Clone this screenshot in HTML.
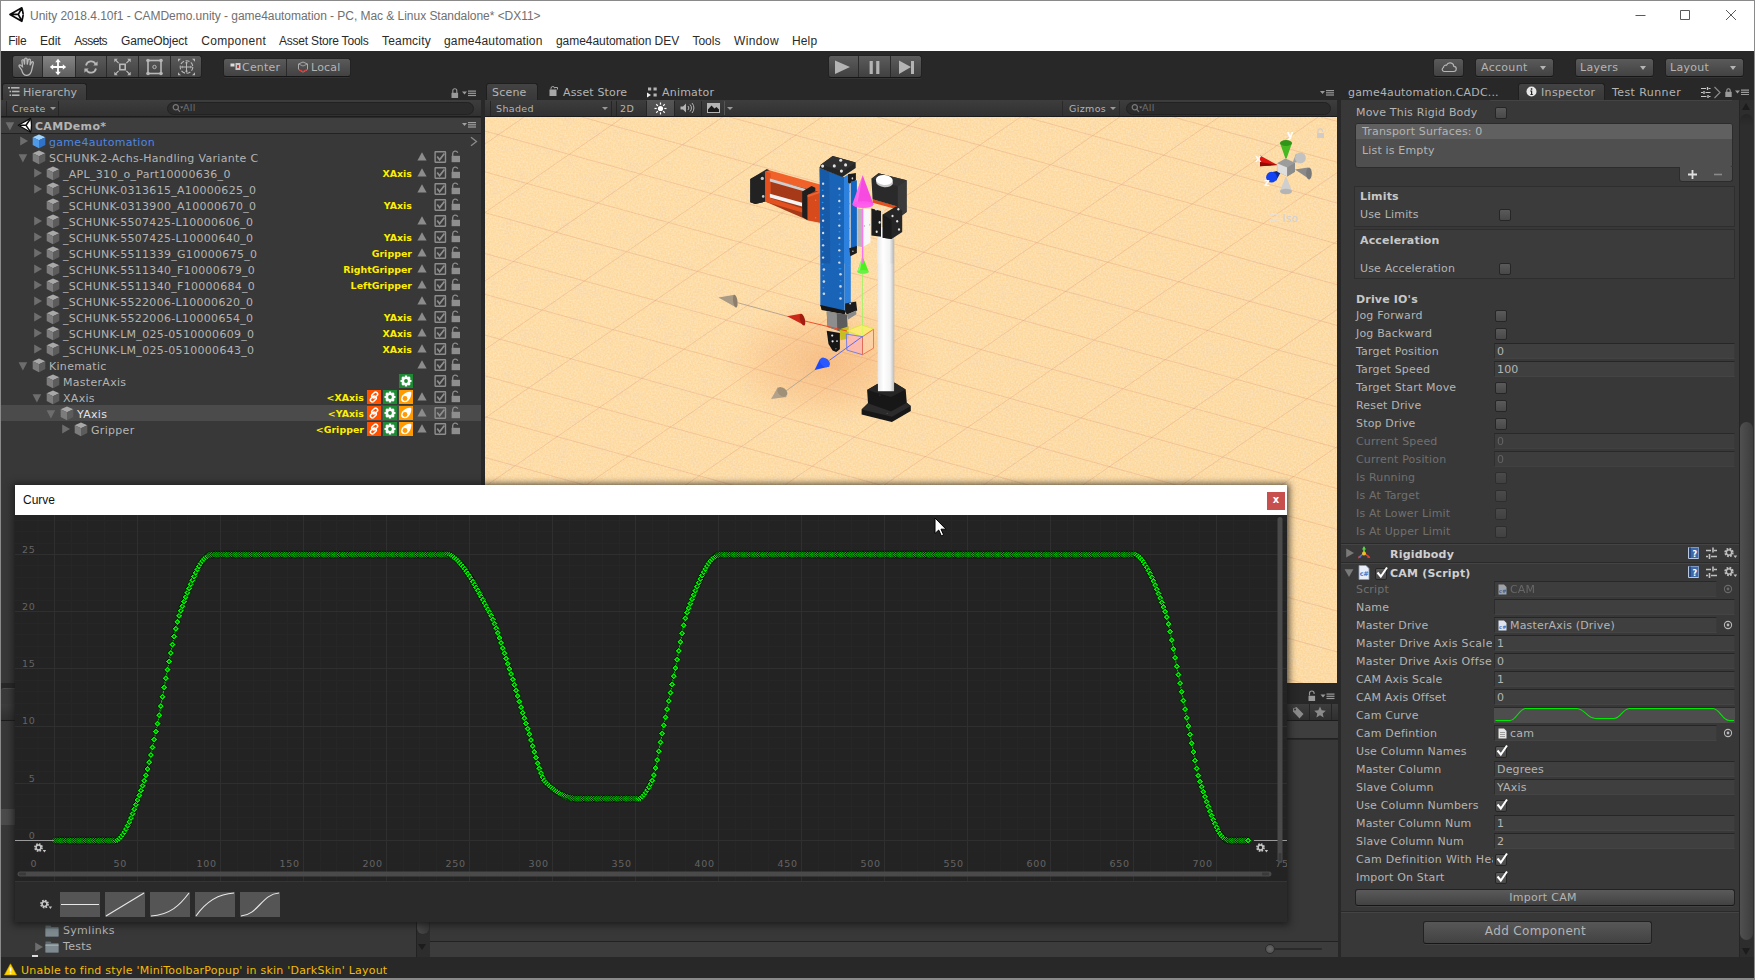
<!DOCTYPE html>
<html lang="en">
<head>
<meta charset="utf-8">
<title>Unity 2018.4.10f1 - CAMDemo.unity</title>
<style>
*{box-sizing:border-box;margin:0;padding:0}
html,body{width:1755px;height:980px;overflow:hidden;background:#282828}
body{position:relative;font:11px "DejaVu Sans","Liberation Sans",sans-serif;letter-spacing:.3px;color:#b4b4b4}
.a{position:absolute}
.t{position:absolute;white-space:pre;line-height:16px;height:16px}
.w{font:12px "Liberation Sans",sans-serif;letter-spacing:0}
.b{font-weight:bold}
.s9{font-size:9.500px;letter-spacing:.35px}
.tab{position:absolute;top:83px;height:17px;background:linear-gradient(#434343,#383838);border:1px solid #1f1f1f;border-bottom:none;border-radius:3px 3px 0 0}
.tb{position:absolute;height:16px;background:linear-gradient(#3d3d3d,#313131);border-bottom:1px solid #1c1c1c}
.btn{position:absolute;background:linear-gradient(#5a5a5a,#424242);border:1px solid #222;border-bottom-color:#161616;border-radius:3px;box-shadow:0 1px 0 rgba(255,255,255,.06)}
.fld{position:absolute;height:16px;background:#3f3f3f;border-top:1px solid #262626;border-left:1px solid #2d2d2d;border-bottom:1px solid #444;border-right:1px solid #3a3a3a;left:1494px;width:241px}
.fld span{position:absolute;left:2px;top:0px;letter-spacing:.17px;line-height:16px;white-space:pre}
.cb{position:absolute;width:12px;height:12px;left:1495px;background:linear-gradient(#5a5a5a,#484848);border:1px solid #262626;border-radius:2px}
.dis{color:#6f6f6f}
.sr{position:absolute;background:#2b2b2b;border-radius:8px;border:1px solid #222}
</style>
</head>
<body>
<!-- window title + menu -->
<div class="a" style="left:0;top:0;width:1755px;height:51px;background:#fff"></div>
<div class="a" style="left:0;top:0;width:1755px;height:1px;background:#8a8a8a"></div>
<div class="a" style="left:0;top:0;width:1px;height:980px;background:#8a8a8a;z-index:50"></div>
<div class="a" style="left:1754px;top:0;width:1px;height:980px;background:#8a8a8a;z-index:50"></div>
<svg class="a" style="left:7px;top:5px" width="20" height="20" viewBox="7 5 20 20" fill="none" stroke="#0a0a0a" stroke-width="1.7" stroke-linejoin="round" stroke-linecap="round"><path d="M10 14.400L21.800 7.800Q22.600 10.500 23.100 13.600M23.100 15.400Q22.600 18.500 21.800 21.300L10 14.400M10.500 14.400H18.300M18.300 14.400L21.600 8.300M18.300 14.400L21.600 20.600"/></svg>
<div class="t w" style="left:30px;top:9px;color:#707070;letter-spacing:-.04px">Unity 2018.4.10f1 - CAMDemo.unity - game4automation - PC, Mac &amp; Linux Standalone* &lt;DX11&gt;</div>
<svg class="a" style="left:1620px;top:0" width="135" height="30" viewBox="0 0 135 30"><path d="M15.5 15.5h10M60.5 10.5h9v9h-9zM106 10l10 10M116 10l-10 10" stroke="#5a5a5a" stroke-width="1" fill="none"/></svg>
<div class="t w" style="left:8.3px;top:34px;color:#2a2a2a;letter-spacing:-0.35px">File</div>
<div class="t w" style="left:40px;top:34px;color:#2a2a2a;letter-spacing:0.00px">Edit</div>
<div class="t w" style="left:74.2px;top:34px;color:#2a2a2a;letter-spacing:-0.52px">Assets</div>
<div class="t w" style="left:121px;top:34px;color:#2a2a2a;letter-spacing:-0.10px">GameObject</div>
<div class="t w" style="left:201.3px;top:34px;color:#2a2a2a;letter-spacing:0.31px">Component</div>
<div class="t w" style="left:279px;top:34px;color:#2a2a2a;letter-spacing:-0.21px">Asset Store Tools</div>
<div class="t w" style="left:382px;top:34px;color:#2a2a2a;letter-spacing:0.19px">Teamcity</div>
<div class="t w" style="left:444px;top:34px;color:#2a2a2a;letter-spacing:0.16px">game4automation</div>
<div class="t w" style="left:556px;top:34px;color:#2a2a2a;letter-spacing:-0.05px">game4automation DEV</div>
<div class="t w" style="left:692.5px;top:34px;color:#2a2a2a;letter-spacing:-0.03px">Tools</div>
<div class="t w" style="left:734px;top:34px;color:#2a2a2a;letter-spacing:0.38px">Window</div>
<div class="t w" style="left:792px;top:34px;color:#2a2a2a;letter-spacing:0.14px">Help</div>

<!-- main toolbar -->
<div class="a" style="left:0;top:51px;width:1755px;height:929px;background:#282828"></div>
<div class="btn" style="left:12px;top:55px;width:190px;height:23px"></div>
<div class="a" style="left:43px;top:56px;width:32px;height:21px;background:linear-gradient(#858585,#5e5e5e)"></div>
<div class="a" style="left:42px;top:56px;width:1px;height:21px;background:#2a2a2a"></div>
<div class="a" style="left:75px;top:56px;width:1px;height:21px;background:#2a2a2a"></div>
<div class="a" style="left:106px;top:56px;width:1px;height:21px;background:#2a2a2a"></div>
<div class="a" style="left:138px;top:56px;width:1px;height:21px;background:#2a2a2a"></div>
<div class="a" style="left:170px;top:56px;width:1px;height:21px;background:#2a2a2a"></div>
<svg class="a" style="left:12px;top:56px" width="190" height="22" viewBox="0 0 190 22" fill="none" stroke="#b8b8b8" stroke-width="1.2">
<!-- hand -->
<path transform="translate(14.300 11.200) scale(1.330) translate(-12.500 -11)" d="M9 13 L7.200 10.600 Q6.600 9.400 7.800 9.200 L9.600 10.600 L9.200 6 Q9.600 5 10.600 5.600 L11.200 9 L11.400 4.600 Q12.200 3.600 13 4.600 L13.200 9 L14 5.200 Q14.900 4.400 15.600 5.400 L15.300 9.600 L16.600 7 Q17.600 6.600 17.800 7.800 L16.600 13 Q16 16.600 13 17.200 Q10 17.400 9 13Z" stroke-width=".95"/>
<!-- move -->
<g transform="translate(-5.500 0)"><g stroke="#fff" stroke-width="1.800"><path d="M46 11h11M51.500 5.500v11"/></g>
<path d="M51.500 2.800l2.800 3.400h-5.600zM51.500 19.200l2.800-3.400h-5.600zM43.300 11l3.400-2.800v5.600zM59.700 11l-3.400-2.800v5.600z" fill="#fff" stroke="none"/></g>
<!-- rotate -->
<path d="M74 9.5 A5.2 5.2 0 0 1 83.6 8" stroke-width="1.8"/><path d="M84 12.500 A5.2 5.200 0 0 1 74.400 14" stroke-width="1.800"/>
<path d="M85.600 5.2v4.300h-4.300z M72.400 16.800v-4.300h4.300z" fill="#b8b8b8" stroke="none"/>
<!-- scale -->
<rect x="107.800" y="8.300" width="5.400" height="5.400" stroke-width="1.600"/>
<path d="M103 3.500l3.600 3.600M118 3.500l-3.600 3.600M103 18.500l3.600-3.600M118 18.500l-3.600-3.600" stroke-width="1.200"/>
<path d="M102.300 2.800h3.500l-3.500 3.500zM118.700 2.800h-3.500l3.500 3.500zM102.300 19.200h3.500l-3.500-3.500zM118.700 19.200h-3.500l3.500-3.500z" fill="#b8b8b8" stroke="none"/>
<!-- rect -->
<rect x="136" y="4.500" width="13" height="13" stroke-width="1.600"/>
<circle cx="136" cy="4.500" r="1.800" fill="#b8b8b8" stroke="none"/><circle cx="149" cy="4.500" r="1.800" fill="#b8b8b8" stroke="none"/><circle cx="136" cy="17.500" r="1.800" fill="#b8b8b8" stroke="none"/><circle cx="149" cy="17.500" r="1.800" fill="#b8b8b8" stroke="none"/>
<circle cx="142.500" cy="11" r="1.700" stroke-width="1"/>
<!-- transform -->
<circle cx="174.500" cy="11" r="6.300" stroke-width="1.100" stroke-dasharray="4 1.600"/>
<path d="M170.500 11h8M174.500 7v8" stroke-width="1"/>
<path d="M174.500 5.300l1.500 1.900h-3zM174.500 16.700l1.500-1.900h-3zM168.800 11l1.900-1.500v3zM180.200 11l-1.900-1.500v3z" fill="#b8b8b8" stroke="none"/>
<path d="M166 2.800h3l-3 3zM183 2.800h-3l3 3zM166 19.200h3l-3-3zM183 19.200h-3l3-3z" fill="#b8b8b8" stroke="none"/>
</svg>

<div class="btn" style="left:223px;top:58px;width:128px;height:19px"></div>
<div class="a" style="left:286px;top:59px;width:1px;height:17px;background:#2a2a2a"></div>
<svg class="a" style="left:230px;top:62px" width="12" height="10" viewBox="0 0 12 10"><rect x="0.500" y="1.500" width="4" height="3" fill="#ddd"/><rect x="5.500" y="1" width="5" height="7" fill="#c8c8c8"/><rect x="7" y="3" width="2" height="3" fill="#d33"/></svg>
<div class="t" style="left:242px;top:60px;letter-spacing:.2px">Center</div>
<svg class="a" style="left:297px;top:61px" width="12" height="12" viewBox="0 0 12 12" fill="none"><path d="M6 1L10.500 3v5.500L6 11 1.500 8.500V3z" stroke="#aaa" stroke-width="1"/><path d="M1.500 8.300L6 10.800l4.500-2.500" stroke="#e33" stroke-width="1.300"/><path d="M1.500 3L6 5l4.500-2" stroke="#aaa" stroke-width=".8"/></svg>
<div class="t" style="left:311px;top:60px;letter-spacing:.2px">Local</div>

<div class="btn" style="left:828px;top:55px;width:94px;height:23px;background:linear-gradient(#5c5c5c,#404040)"></div>
<div class="a" style="left:858px;top:56px;width:1px;height:21px;background:#2a2a2a"></div>
<div class="a" style="left:890px;top:56px;width:1px;height:21px;background:#2a2a2a"></div>
<svg class="a" style="left:828px;top:56px" width="94" height="22" viewBox="0 0 94 22" fill="#b4b4b4"><path d="M7 4.500L22 11 7 18zM41.600 5h3.200v13h-3.200zM48.200 5h3.200v13h-3.200zM71 4.500L83 11 71 18zM83 5h3v13h-3z"/></svg>

<div class="btn" style="left:1433px;top:58px;width:31px;height:19px"></div>
<svg class="a" style="left:1440px;top:62px" width="17" height="11" viewBox="0 0 17 11" fill="none" stroke="#b4b4b4" stroke-width="1.200"><path d="M4 9.500h9.500a2.600 2.600 0 0 0 .300-5.200a3.800 3.800 0 0 0-7.300-1a2.300 2.300 0 0 0-3 2.200a2.100 2.100 0 0 0 .5 4z"/></svg>
<div class="btn" style="left:1475px;top:58px;width:79px;height:19px"></div>
<div class="t" style="left:1481px;top:60px">Account</div>
<div class="a" style="left:1540px;top:66px;border:3px solid transparent;border-top:4px solid #b4b4b4"></div>
<div class="btn" style="left:1575px;top:58px;width:79px;height:19px"></div>
<div class="t" style="left:1580px;top:60px">Layers</div>
<div class="a" style="left:1640px;top:66px;border:3px solid transparent;border-top:4px solid #b4b4b4"></div>
<div class="btn" style="left:1665px;top:58px;width:79px;height:19px"></div>
<div class="t" style="left:1670px;top:60px">Layout</div>
<div class="a" style="left:1730px;top:66px;border:3px solid transparent;border-top:4px solid #b4b4b4"></div>
<!-- hierarchy -->
<div class="a" style="left:1px;top:100px;width:480px;height:860px;background:#383838"></div>
<div class="tab" style="left:2px;width:85px"></div>
<svg class="a" style="left:8px;top:87px" width="12" height="10" viewBox="0 0 12 10" fill="#b4b4b4"><rect x="0" y="0" width="2" height="1.600"/><rect x="3" y="0" width="8.500" height="1.600"/><rect x="1.500" y="3.700" width="1.600" height="1.600"/><rect x="4" y="3.700" width="7.500" height="1.600"/><rect x="1.500" y="7.400" width="1.600" height="1.600"/><rect x="4" y="7.400" width="7.500" height="1.600"/></svg>
<div class="t" style="left:23px;top:85px;letter-spacing:.1px">Hierarchy</div>
<svg class="a" style="left:451px;top:87px" width="26" height="12" viewBox="0 0 26 12" fill="#9a9a9a"><path d="M1.800 6V3.800a2 2 0 0 1 4 0V6" fill="none" stroke="#9a9a9a" stroke-width="1.100"/><rect x="0.500" y="5.800" width="6.600" height="5.200"/><path d="M11 4.500h5l-2.500 3z"/><rect x="17" y="3.500" width="8" height="1.200"/><rect x="17" y="5.700" width="8" height="1.200"/><rect x="17" y="7.900" width="8" height="1.200"/></svg>
<div class="tb" style="left:1px;top:100px;width:480px;height:17px"></div>
<div class="t s9" style="left:12px;top:101px">Create</div>
<div class="a" style="left:50px;top:107px;border:3px solid transparent;border-top:3px solid #999"></div>
<div class="a" style="left:58px;top:101px;width:1px;height:15px;background:#252525"></div>
<div class="a" style="left:6px;top:101px;width:1px;height:15px;background:#252525"></div>
<div class="sr" style="left:167px;top:102px;width:307px;height:13px"></div>
<svg class="a" style="left:172px;top:103px" width="12" height="11" viewBox="0 0 12 11" fill="none" stroke="#7a7a7a" stroke-width="1.200"><circle cx="3.800" cy="4.300" r="2.600"/><path d="M5.700 6.300l2.300 2.500"/><path d="M8 3.500h3.400l-1.700 2z" fill="#7a7a7a" stroke="none"/></svg>
<div class="t s9" style="left:183px;top:100px;color:#6e6e6e;font-size:9.500px">All</div>
<div class="a" style="left:1px;top:117px;width:480px;height:17px;background:#3e3e3e;border-top:1px solid #2a2a2a;border-bottom:1px solid #222"></div>
<svg class="a" style="left:462px;top:122px" width="15" height="8" viewBox="0 0 15 8" fill="#a0a0a0"><path d="M0 1h5l-2.500 3z"/><rect x="6" y="0" width="8" height="1.200"/><rect x="6" y="2.200" width="8" height="1.200"/><rect x="6" y="4.400" width="8" height="1.200"/></svg>
<svg class="a" style="left:5px;top:121px" width="10" height="10" viewBox="0 0 10 10"><path d="M0.600 1.200h8.600L4.900 9.400z" fill="#6d6d6d"/></svg>
<svg class="a" style="left:17px;top:117px" width="16" height="16" viewBox="0 0 16 16"><path d="M1.300 8.300L13.600 1.400Q15.400 8.300 13.600 15.200z" fill="#fff" stroke="#0c0c0c" stroke-width="1.300" stroke-linejoin="round"/><path d="M2.500 8.300H9M9 8.300L13 2.500M9 8.300L13 14.200" stroke="#0c0c0c" stroke-width="1.500" fill="none"/></svg>
<div class="t b" style="left:35px;top:119px;color:#b4b4b4;letter-spacing:.3px">CAMDemo*</div>
<svg class="a" style="left:19px;top:136px" width="10" height="10" viewBox="0 0 10 10"><path d="M1.200 0.600v8.800L9 5z" fill="#6d6d6d"/></svg>
<svg class="a" style="left:32px;top:134px" width="14" height="15" viewBox="0 0 14 15"><path d="M7 0.500L13.300 3.300 7 6.300 0.700 3.300z" fill="#9fd4ff"/><path d="M0.700 3.300L7 6.300V14.300L0.700 11z" fill="#4f9ae8"/><path d="M13.300 3.300L7 6.300V14.300L13.300 11z" fill="#2f72c8"/></svg>
<div class="t" style="left:49px;top:135px;color:#4f86e0">game4automation</div>
<svg class="a" style="left:470px;top:136px" width="8" height="11" viewBox="0 0 8 11"><path d="M1 1.200L6.500 5.500 1 9.800" fill="none" stroke="#8a8a8a" stroke-width="1.300"/></svg>
<svg class="a" style="left:18px;top:153px" width="10" height="10" viewBox="0 0 10 10"><path d="M0.600 1.200h8.600L4.900 9.400z" fill="#6d6d6d"/></svg>
<svg class="a" style="left:32px;top:150px" width="14" height="15" viewBox="0 0 14 15"><path d="M7 0.500L13.300 3.300 7 6.300 0.700 3.300z" fill="#a8a8a8"/><path d="M0.700 3.300L7 6.300V14.300L0.700 11z" fill="#7c7c7c"/><path d="M13.300 3.300L7 6.300V14.300L13.300 11z" fill="#5c5c5c"/></svg>
<div class="t" style="left:49px;top:151px;color:#b4b4b4">SCHUNK-2-Achs-Handling Variante C</div>
<svg class="a" style="left:434px;top:151px" width="13" height="12" viewBox="0 0 13 12" fill="none" stroke="#8e8e8e"><rect x="1.100" y="0.800" width="10.400" height="10.400" rx=".4" stroke-width="1.400"/><path d="M3.200 5.600L5.600 8.800 10.400 2.400" stroke-width="1.700"/></svg>
<svg class="a" style="left:451px;top:150px" width="10" height="13" viewBox="0 0 10 13"><path d="M1.700 6V3.600a2.600 2.600 0 0 1 5-0.800" fill="none" stroke="#8e8e8e" stroke-width="1.300"/><rect x="0.600" y="5.800" width="8.400" height="6.400" fill="#8e8e8e"/></svg>
<svg class="a" style="left:417px;top:152px" width="10" height="9" viewBox="0 0 10 9"><path d="M5 0.300L9.600 8.400H0.400z" fill="#8c8c8c"/></svg>
<svg class="a" style="left:33px;top:168px" width="10" height="10" viewBox="0 0 10 10"><path d="M1.200 0.600v8.800L9 5z" fill="#6d6d6d"/></svg>
<svg class="a" style="left:46px;top:166px" width="14" height="15" viewBox="0 0 14 15"><path d="M7 0.500L13.300 3.300 7 6.300 0.700 3.300z" fill="#a8a8a8"/><path d="M0.700 3.300L7 6.300V14.300L0.700 11z" fill="#7c7c7c"/><path d="M13.300 3.300L7 6.300V14.300L13.300 11z" fill="#5c5c5c"/></svg>
<div class="t" style="left:63px;top:167px;color:#b4b4b4">_APL_310_o_Part10000636_0</div>
<svg class="a" style="left:434px;top:167px" width="13" height="12" viewBox="0 0 13 12" fill="none" stroke="#8e8e8e"><rect x="1.100" y="0.800" width="10.400" height="10.400" rx=".4" stroke-width="1.400"/><path d="M3.200 5.600L5.600 8.800 10.400 2.400" stroke-width="1.700"/></svg>
<svg class="a" style="left:451px;top:166px" width="10" height="13" viewBox="0 0 10 13"><path d="M1.700 6V3.600a2.600 2.600 0 0 1 5-0.800" fill="none" stroke="#8e8e8e" stroke-width="1.300"/><rect x="0.600" y="5.800" width="8.400" height="6.400" fill="#8e8e8e"/></svg>
<svg class="a" style="left:417px;top:168px" width="10" height="9" viewBox="0 0 10 9"><path d="M5 0.300L9.600 8.400H0.400z" fill="#8c8c8c"/></svg>
<div class="t b" style="right:1343px;top:166px;color:#ffee00;font-size:9.400px;letter-spacing:.05px">XAxis</div>
<svg class="a" style="left:33px;top:184px" width="10" height="10" viewBox="0 0 10 10"><path d="M1.200 0.600v8.800L9 5z" fill="#6d6d6d"/></svg>
<svg class="a" style="left:46px;top:182px" width="14" height="15" viewBox="0 0 14 15"><path d="M7 0.500L13.300 3.300 7 6.300 0.700 3.300z" fill="#a8a8a8"/><path d="M0.700 3.300L7 6.300V14.300L0.700 11z" fill="#7c7c7c"/><path d="M13.300 3.300L7 6.300V14.300L13.300 11z" fill="#5c5c5c"/></svg>
<div class="t" style="left:63px;top:183px;color:#b4b4b4">_SCHUNK-0313615_A10000625_0</div>
<svg class="a" style="left:434px;top:183px" width="13" height="12" viewBox="0 0 13 12" fill="none" stroke="#8e8e8e"><rect x="1.100" y="0.800" width="10.400" height="10.400" rx=".4" stroke-width="1.400"/><path d="M3.200 5.600L5.600 8.800 10.400 2.400" stroke-width="1.700"/></svg>
<svg class="a" style="left:451px;top:182px" width="10" height="13" viewBox="0 0 10 13"><path d="M1.700 6V3.600a2.600 2.600 0 0 1 5-0.800" fill="none" stroke="#8e8e8e" stroke-width="1.300"/><rect x="0.600" y="5.800" width="8.400" height="6.400" fill="#8e8e8e"/></svg>
<svg class="a" style="left:417px;top:184px" width="10" height="9" viewBox="0 0 10 9"><path d="M5 0.300L9.600 8.400H0.400z" fill="#8c8c8c"/></svg>
<svg class="a" style="left:46px;top:198px" width="14" height="15" viewBox="0 0 14 15"><path d="M7 0.500L13.300 3.300 7 6.300 0.700 3.300z" fill="#a8a8a8"/><path d="M0.700 3.300L7 6.300V14.300L0.700 11z" fill="#7c7c7c"/><path d="M13.300 3.300L7 6.300V14.300L13.300 11z" fill="#5c5c5c"/></svg>
<div class="t" style="left:63px;top:199px;color:#b4b4b4">_SCHUNK-0313900_A10000670_0</div>
<svg class="a" style="left:434px;top:199px" width="13" height="12" viewBox="0 0 13 12" fill="none" stroke="#8e8e8e"><rect x="1.100" y="0.800" width="10.400" height="10.400" rx=".4" stroke-width="1.400"/><path d="M3.200 5.600L5.600 8.800 10.400 2.400" stroke-width="1.700"/></svg>
<svg class="a" style="left:451px;top:198px" width="10" height="13" viewBox="0 0 10 13"><path d="M1.700 6V3.600a2.600 2.600 0 0 1 5-0.800" fill="none" stroke="#8e8e8e" stroke-width="1.300"/><rect x="0.600" y="5.800" width="8.400" height="6.400" fill="#8e8e8e"/></svg>
<div class="t b" style="right:1343px;top:198px;color:#ffee00;font-size:9.400px;letter-spacing:.05px">YAxis</div>
<svg class="a" style="left:33px;top:216px" width="10" height="10" viewBox="0 0 10 10"><path d="M1.200 0.600v8.800L9 5z" fill="#6d6d6d"/></svg>
<svg class="a" style="left:46px;top:214px" width="14" height="15" viewBox="0 0 14 15"><path d="M7 0.500L13.300 3.300 7 6.300 0.700 3.300z" fill="#a8a8a8"/><path d="M0.700 3.300L7 6.300V14.300L0.700 11z" fill="#7c7c7c"/><path d="M13.300 3.300L7 6.300V14.300L13.300 11z" fill="#5c5c5c"/></svg>
<div class="t" style="left:63px;top:215px;color:#b4b4b4">_SCHUNK-5507425-L10000606_0</div>
<svg class="a" style="left:434px;top:215px" width="13" height="12" viewBox="0 0 13 12" fill="none" stroke="#8e8e8e"><rect x="1.100" y="0.800" width="10.400" height="10.400" rx=".4" stroke-width="1.400"/><path d="M3.200 5.600L5.600 8.800 10.400 2.400" stroke-width="1.700"/></svg>
<svg class="a" style="left:451px;top:214px" width="10" height="13" viewBox="0 0 10 13"><path d="M1.700 6V3.600a2.600 2.600 0 0 1 5-0.800" fill="none" stroke="#8e8e8e" stroke-width="1.300"/><rect x="0.600" y="5.800" width="8.400" height="6.400" fill="#8e8e8e"/></svg>
<svg class="a" style="left:417px;top:216px" width="10" height="9" viewBox="0 0 10 9"><path d="M5 0.300L9.600 8.400H0.400z" fill="#8c8c8c"/></svg>
<svg class="a" style="left:33px;top:232px" width="10" height="10" viewBox="0 0 10 10"><path d="M1.200 0.600v8.800L9 5z" fill="#6d6d6d"/></svg>
<svg class="a" style="left:46px;top:230px" width="14" height="15" viewBox="0 0 14 15"><path d="M7 0.500L13.300 3.300 7 6.300 0.700 3.300z" fill="#a8a8a8"/><path d="M0.700 3.300L7 6.300V14.300L0.700 11z" fill="#7c7c7c"/><path d="M13.300 3.300L7 6.300V14.300L13.300 11z" fill="#5c5c5c"/></svg>
<div class="t" style="left:63px;top:231px;color:#b4b4b4">_SCHUNK-5507425-L10000640_0</div>
<svg class="a" style="left:434px;top:231px" width="13" height="12" viewBox="0 0 13 12" fill="none" stroke="#8e8e8e"><rect x="1.100" y="0.800" width="10.400" height="10.400" rx=".4" stroke-width="1.400"/><path d="M3.200 5.600L5.600 8.800 10.400 2.400" stroke-width="1.700"/></svg>
<svg class="a" style="left:451px;top:230px" width="10" height="13" viewBox="0 0 10 13"><path d="M1.700 6V3.600a2.600 2.600 0 0 1 5-0.800" fill="none" stroke="#8e8e8e" stroke-width="1.300"/><rect x="0.600" y="5.800" width="8.400" height="6.400" fill="#8e8e8e"/></svg>
<svg class="a" style="left:417px;top:232px" width="10" height="9" viewBox="0 0 10 9"><path d="M5 0.300L9.600 8.400H0.400z" fill="#8c8c8c"/></svg>
<div class="t b" style="right:1343px;top:230px;color:#ffee00;font-size:9.400px;letter-spacing:.05px">YAxis</div>
<svg class="a" style="left:33px;top:248px" width="10" height="10" viewBox="0 0 10 10"><path d="M1.200 0.600v8.800L9 5z" fill="#6d6d6d"/></svg>
<svg class="a" style="left:46px;top:246px" width="14" height="15" viewBox="0 0 14 15"><path d="M7 0.500L13.300 3.300 7 6.300 0.700 3.300z" fill="#a8a8a8"/><path d="M0.700 3.300L7 6.300V14.300L0.700 11z" fill="#7c7c7c"/><path d="M13.300 3.300L7 6.300V14.300L13.300 11z" fill="#5c5c5c"/></svg>
<div class="t" style="left:63px;top:247px;color:#b4b4b4">_SCHUNK-5511339_G10000675_0</div>
<svg class="a" style="left:434px;top:247px" width="13" height="12" viewBox="0 0 13 12" fill="none" stroke="#8e8e8e"><rect x="1.100" y="0.800" width="10.400" height="10.400" rx=".4" stroke-width="1.400"/><path d="M3.200 5.600L5.600 8.800 10.400 2.400" stroke-width="1.700"/></svg>
<svg class="a" style="left:451px;top:246px" width="10" height="13" viewBox="0 0 10 13"><path d="M1.700 6V3.600a2.600 2.600 0 0 1 5-0.800" fill="none" stroke="#8e8e8e" stroke-width="1.300"/><rect x="0.600" y="5.800" width="8.400" height="6.400" fill="#8e8e8e"/></svg>
<svg class="a" style="left:417px;top:248px" width="10" height="9" viewBox="0 0 10 9"><path d="M5 0.300L9.600 8.400H0.400z" fill="#8c8c8c"/></svg>
<div class="t b" style="right:1343px;top:246px;color:#ffee00;font-size:9.400px;letter-spacing:.05px">Gripper</div>
<svg class="a" style="left:33px;top:264px" width="10" height="10" viewBox="0 0 10 10"><path d="M1.200 0.600v8.800L9 5z" fill="#6d6d6d"/></svg>
<svg class="a" style="left:46px;top:262px" width="14" height="15" viewBox="0 0 14 15"><path d="M7 0.500L13.300 3.300 7 6.300 0.700 3.300z" fill="#a8a8a8"/><path d="M0.700 3.300L7 6.300V14.300L0.700 11z" fill="#7c7c7c"/><path d="M13.300 3.300L7 6.300V14.300L13.300 11z" fill="#5c5c5c"/></svg>
<div class="t" style="left:63px;top:263px;color:#b4b4b4">_SCHUNK-5511340_F10000679_0</div>
<svg class="a" style="left:434px;top:263px" width="13" height="12" viewBox="0 0 13 12" fill="none" stroke="#8e8e8e"><rect x="1.100" y="0.800" width="10.400" height="10.400" rx=".4" stroke-width="1.400"/><path d="M3.200 5.600L5.600 8.800 10.400 2.400" stroke-width="1.700"/></svg>
<svg class="a" style="left:451px;top:262px" width="10" height="13" viewBox="0 0 10 13"><path d="M1.700 6V3.600a2.600 2.600 0 0 1 5-0.800" fill="none" stroke="#8e8e8e" stroke-width="1.300"/><rect x="0.600" y="5.800" width="8.400" height="6.400" fill="#8e8e8e"/></svg>
<svg class="a" style="left:417px;top:264px" width="10" height="9" viewBox="0 0 10 9"><path d="M5 0.300L9.600 8.400H0.400z" fill="#8c8c8c"/></svg>
<div class="t b" style="right:1343px;top:262px;color:#ffee00;font-size:9.400px;letter-spacing:.05px">RightGripper</div>
<svg class="a" style="left:33px;top:280px" width="10" height="10" viewBox="0 0 10 10"><path d="M1.200 0.600v8.800L9 5z" fill="#6d6d6d"/></svg>
<svg class="a" style="left:46px;top:278px" width="14" height="15" viewBox="0 0 14 15"><path d="M7 0.500L13.300 3.300 7 6.300 0.700 3.300z" fill="#a8a8a8"/><path d="M0.700 3.300L7 6.300V14.300L0.700 11z" fill="#7c7c7c"/><path d="M13.300 3.300L7 6.300V14.300L13.300 11z" fill="#5c5c5c"/></svg>
<div class="t" style="left:63px;top:279px;color:#b4b4b4">_SCHUNK-5511340_F10000684_0</div>
<svg class="a" style="left:434px;top:279px" width="13" height="12" viewBox="0 0 13 12" fill="none" stroke="#8e8e8e"><rect x="1.100" y="0.800" width="10.400" height="10.400" rx=".4" stroke-width="1.400"/><path d="M3.200 5.600L5.600 8.800 10.400 2.400" stroke-width="1.700"/></svg>
<svg class="a" style="left:451px;top:278px" width="10" height="13" viewBox="0 0 10 13"><path d="M1.700 6V3.600a2.600 2.600 0 0 1 5-0.800" fill="none" stroke="#8e8e8e" stroke-width="1.300"/><rect x="0.600" y="5.800" width="8.400" height="6.400" fill="#8e8e8e"/></svg>
<svg class="a" style="left:417px;top:280px" width="10" height="9" viewBox="0 0 10 9"><path d="M5 0.300L9.600 8.400H0.400z" fill="#8c8c8c"/></svg>
<div class="t b" style="right:1343px;top:278px;color:#ffee00;font-size:9.400px;letter-spacing:.05px">LeftGripper</div>
<svg class="a" style="left:33px;top:296px" width="10" height="10" viewBox="0 0 10 10"><path d="M1.200 0.600v8.800L9 5z" fill="#6d6d6d"/></svg>
<svg class="a" style="left:46px;top:294px" width="14" height="15" viewBox="0 0 14 15"><path d="M7 0.500L13.300 3.300 7 6.300 0.700 3.300z" fill="#a8a8a8"/><path d="M0.700 3.300L7 6.300V14.300L0.700 11z" fill="#7c7c7c"/><path d="M13.300 3.300L7 6.300V14.300L13.300 11z" fill="#5c5c5c"/></svg>
<div class="t" style="left:63px;top:295px;color:#b4b4b4">_SCHUNK-5522006-L10000620_0</div>
<svg class="a" style="left:434px;top:295px" width="13" height="12" viewBox="0 0 13 12" fill="none" stroke="#8e8e8e"><rect x="1.100" y="0.800" width="10.400" height="10.400" rx=".4" stroke-width="1.400"/><path d="M3.200 5.600L5.600 8.800 10.400 2.400" stroke-width="1.700"/></svg>
<svg class="a" style="left:451px;top:294px" width="10" height="13" viewBox="0 0 10 13"><path d="M1.700 6V3.600a2.600 2.600 0 0 1 5-0.800" fill="none" stroke="#8e8e8e" stroke-width="1.300"/><rect x="0.600" y="5.800" width="8.400" height="6.400" fill="#8e8e8e"/></svg>
<svg class="a" style="left:417px;top:296px" width="10" height="9" viewBox="0 0 10 9"><path d="M5 0.300L9.600 8.400H0.400z" fill="#8c8c8c"/></svg>
<svg class="a" style="left:33px;top:312px" width="10" height="10" viewBox="0 0 10 10"><path d="M1.200 0.600v8.800L9 5z" fill="#6d6d6d"/></svg>
<svg class="a" style="left:46px;top:310px" width="14" height="15" viewBox="0 0 14 15"><path d="M7 0.500L13.300 3.300 7 6.300 0.700 3.300z" fill="#a8a8a8"/><path d="M0.700 3.300L7 6.300V14.300L0.700 11z" fill="#7c7c7c"/><path d="M13.300 3.300L7 6.300V14.300L13.300 11z" fill="#5c5c5c"/></svg>
<div class="t" style="left:63px;top:311px;color:#b4b4b4">_SCHUNK-5522006-L10000654_0</div>
<svg class="a" style="left:434px;top:311px" width="13" height="12" viewBox="0 0 13 12" fill="none" stroke="#8e8e8e"><rect x="1.100" y="0.800" width="10.400" height="10.400" rx=".4" stroke-width="1.400"/><path d="M3.200 5.600L5.600 8.800 10.400 2.400" stroke-width="1.700"/></svg>
<svg class="a" style="left:451px;top:310px" width="10" height="13" viewBox="0 0 10 13"><path d="M1.700 6V3.600a2.600 2.600 0 0 1 5-0.800" fill="none" stroke="#8e8e8e" stroke-width="1.300"/><rect x="0.600" y="5.800" width="8.400" height="6.400" fill="#8e8e8e"/></svg>
<svg class="a" style="left:417px;top:312px" width="10" height="9" viewBox="0 0 10 9"><path d="M5 0.300L9.600 8.400H0.400z" fill="#8c8c8c"/></svg>
<div class="t b" style="right:1343px;top:310px;color:#ffee00;font-size:9.400px;letter-spacing:.05px">YAxis</div>
<svg class="a" style="left:33px;top:328px" width="10" height="10" viewBox="0 0 10 10"><path d="M1.200 0.600v8.800L9 5z" fill="#6d6d6d"/></svg>
<svg class="a" style="left:46px;top:326px" width="14" height="15" viewBox="0 0 14 15"><path d="M7 0.500L13.300 3.300 7 6.300 0.700 3.300z" fill="#a8a8a8"/><path d="M0.700 3.300L7 6.300V14.300L0.700 11z" fill="#7c7c7c"/><path d="M13.300 3.300L7 6.300V14.300L13.300 11z" fill="#5c5c5c"/></svg>
<div class="t" style="left:63px;top:327px;color:#b4b4b4">_SCHUNK-LM_025-0510000609_0</div>
<svg class="a" style="left:434px;top:327px" width="13" height="12" viewBox="0 0 13 12" fill="none" stroke="#8e8e8e"><rect x="1.100" y="0.800" width="10.400" height="10.400" rx=".4" stroke-width="1.400"/><path d="M3.200 5.600L5.600 8.800 10.400 2.400" stroke-width="1.700"/></svg>
<svg class="a" style="left:451px;top:326px" width="10" height="13" viewBox="0 0 10 13"><path d="M1.700 6V3.600a2.600 2.600 0 0 1 5-0.800" fill="none" stroke="#8e8e8e" stroke-width="1.300"/><rect x="0.600" y="5.800" width="8.400" height="6.400" fill="#8e8e8e"/></svg>
<svg class="a" style="left:417px;top:328px" width="10" height="9" viewBox="0 0 10 9"><path d="M5 0.300L9.600 8.400H0.400z" fill="#8c8c8c"/></svg>
<div class="t b" style="right:1343px;top:326px;color:#ffee00;font-size:9.400px;letter-spacing:.05px">XAxis</div>
<svg class="a" style="left:33px;top:344px" width="10" height="10" viewBox="0 0 10 10"><path d="M1.200 0.600v8.800L9 5z" fill="#6d6d6d"/></svg>
<svg class="a" style="left:46px;top:342px" width="14" height="15" viewBox="0 0 14 15"><path d="M7 0.500L13.300 3.300 7 6.300 0.700 3.300z" fill="#a8a8a8"/><path d="M0.700 3.300L7 6.300V14.300L0.700 11z" fill="#7c7c7c"/><path d="M13.300 3.300L7 6.300V14.300L13.300 11z" fill="#5c5c5c"/></svg>
<div class="t" style="left:63px;top:343px;color:#b4b4b4">_SCHUNK-LM_025-0510000643_0</div>
<svg class="a" style="left:434px;top:343px" width="13" height="12" viewBox="0 0 13 12" fill="none" stroke="#8e8e8e"><rect x="1.100" y="0.800" width="10.400" height="10.400" rx=".4" stroke-width="1.400"/><path d="M3.200 5.600L5.600 8.800 10.400 2.400" stroke-width="1.700"/></svg>
<svg class="a" style="left:451px;top:342px" width="10" height="13" viewBox="0 0 10 13"><path d="M1.700 6V3.600a2.600 2.600 0 0 1 5-0.800" fill="none" stroke="#8e8e8e" stroke-width="1.300"/><rect x="0.600" y="5.800" width="8.400" height="6.400" fill="#8e8e8e"/></svg>
<svg class="a" style="left:417px;top:344px" width="10" height="9" viewBox="0 0 10 9"><path d="M5 0.300L9.600 8.400H0.400z" fill="#8c8c8c"/></svg>
<div class="t b" style="right:1343px;top:342px;color:#ffee00;font-size:9.400px;letter-spacing:.05px">XAxis</div>
<svg class="a" style="left:18px;top:361px" width="10" height="10" viewBox="0 0 10 10"><path d="M0.600 1.200h8.600L4.900 9.400z" fill="#6d6d6d"/></svg>
<svg class="a" style="left:32px;top:358px" width="14" height="15" viewBox="0 0 14 15"><path d="M7 0.500L13.300 3.300 7 6.300 0.700 3.300z" fill="#a8a8a8"/><path d="M0.700 3.300L7 6.300V14.300L0.700 11z" fill="#7c7c7c"/><path d="M13.300 3.300L7 6.300V14.300L13.300 11z" fill="#5c5c5c"/></svg>
<div class="t" style="left:49px;top:359px;color:#b4b4b4">Kinematic</div>
<svg class="a" style="left:434px;top:359px" width="13" height="12" viewBox="0 0 13 12" fill="none" stroke="#8e8e8e"><rect x="1.100" y="0.800" width="10.400" height="10.400" rx=".4" stroke-width="1.400"/><path d="M3.200 5.600L5.600 8.800 10.400 2.400" stroke-width="1.700"/></svg>
<svg class="a" style="left:451px;top:358px" width="10" height="13" viewBox="0 0 10 13"><path d="M1.700 6V3.600a2.600 2.600 0 0 1 5-0.800" fill="none" stroke="#8e8e8e" stroke-width="1.300"/><rect x="0.600" y="5.800" width="8.400" height="6.400" fill="#8e8e8e"/></svg>
<svg class="a" style="left:417px;top:360px" width="10" height="9" viewBox="0 0 10 9"><path d="M5 0.300L9.600 8.400H0.400z" fill="#8c8c8c"/></svg>
<svg class="a" style="left:46px;top:374px" width="14" height="15" viewBox="0 0 14 15"><path d="M7 0.500L13.300 3.300 7 6.300 0.700 3.300z" fill="#a8a8a8"/><path d="M0.700 3.300L7 6.300V14.300L0.700 11z" fill="#7c7c7c"/><path d="M13.300 3.300L7 6.300V14.300L13.300 11z" fill="#5c5c5c"/></svg>
<div class="t" style="left:63px;top:375px;color:#b4b4b4">MasterAxis</div>
<svg class="a" style="left:434px;top:375px" width="13" height="12" viewBox="0 0 13 12" fill="none" stroke="#8e8e8e"><rect x="1.100" y="0.800" width="10.400" height="10.400" rx=".4" stroke-width="1.400"/><path d="M3.200 5.600L5.600 8.800 10.400 2.400" stroke-width="1.700"/></svg>
<svg class="a" style="left:451px;top:374px" width="10" height="13" viewBox="0 0 10 13"><path d="M1.700 6V3.600a2.600 2.600 0 0 1 5-0.800" fill="none" stroke="#8e8e8e" stroke-width="1.300"/><rect x="0.600" y="5.800" width="8.400" height="6.400" fill="#8e8e8e"/></svg>
<svg class="a" style="left:399px;top:374px" width="14" height="14" viewBox="0 0 14 14"><rect width="14" height="14" fill="#1e8a34"/><path d="M12.49 5.89L12.49 8.11L10.71 8.48L10.68 8.58L11.67 10.09L10.09 11.67L8.58 10.68L8.48 10.71L8.11 12.49L5.89 12.49L5.52 10.71L5.42 10.68L3.91 11.67L2.33 10.09L3.32 8.58L3.29 8.48L1.51 8.11L1.51 5.89L3.29 5.52L3.32 5.42L2.33 3.91L3.91 2.33L5.42 3.32L5.52 3.29L5.89 1.51L8.11 1.51L8.48 3.29L8.58 3.32L10.09 2.33L11.67 3.91L10.68 5.42L10.71 5.52z" fill="#fff"/><circle cx="7" cy="7" r="1.900" fill="#1e8a34"/></svg>
<svg class="a" style="left:32px;top:393px" width="10" height="10" viewBox="0 0 10 10"><path d="M0.600 1.200h8.600L4.900 9.400z" fill="#6d6d6d"/></svg>
<svg class="a" style="left:46px;top:390px" width="14" height="15" viewBox="0 0 14 15"><path d="M7 0.500L13.300 3.300 7 6.300 0.700 3.300z" fill="#a8a8a8"/><path d="M0.700 3.300L7 6.300V14.300L0.700 11z" fill="#7c7c7c"/><path d="M13.300 3.300L7 6.300V14.300L13.300 11z" fill="#5c5c5c"/></svg>
<div class="t" style="left:63px;top:391px;color:#b4b4b4">XAxis</div>
<svg class="a" style="left:434px;top:391px" width="13" height="12" viewBox="0 0 13 12" fill="none" stroke="#8e8e8e"><rect x="1.100" y="0.800" width="10.400" height="10.400" rx=".4" stroke-width="1.400"/><path d="M3.200 5.600L5.600 8.800 10.400 2.400" stroke-width="1.700"/></svg>
<svg class="a" style="left:451px;top:390px" width="10" height="13" viewBox="0 0 10 13"><path d="M1.700 6V3.600a2.600 2.600 0 0 1 5-0.800" fill="none" stroke="#8e8e8e" stroke-width="1.300"/><rect x="0.600" y="5.800" width="8.400" height="6.400" fill="#8e8e8e"/></svg>
<svg class="a" style="left:417px;top:392px" width="10" height="9" viewBox="0 0 10 9"><path d="M5 0.300L9.600 8.400H0.400z" fill="#8c8c8c"/></svg>
<svg class="a" style="left:367px;top:390px" width="14" height="14" viewBox="0 0 14 14"><rect width="14" height="14" fill="#ff5200"/><g fill="none" stroke="#fff" stroke-width="1.500" stroke-linecap="round"><rect x="5.700" y="1.700" width="4" height="6.600" rx="2" transform="rotate(45 7.700 5)"/><rect x="4.300" y="5.700" width="4" height="6.600" rx="2" transform="rotate(45 6.300 9)"/></g></svg>
<svg class="a" style="left:383px;top:390px" width="14" height="14" viewBox="0 0 14 14"><rect width="14" height="14" fill="#1e8a34"/><path d="M12.49 5.89L12.49 8.11L10.71 8.48L10.68 8.58L11.67 10.09L10.09 11.67L8.58 10.68L8.48 10.71L8.11 12.49L5.89 12.49L5.52 10.71L5.42 10.68L3.91 11.67L2.33 10.09L3.32 8.58L3.29 8.48L1.51 8.11L1.51 5.89L3.29 5.52L3.32 5.42L2.33 3.91L3.91 2.33L5.42 3.32L5.52 3.29L5.89 1.51L8.11 1.51L8.48 3.29L8.58 3.32L10.09 2.33L11.67 3.91L10.68 5.42L10.71 5.52z" fill="#fff"/><circle cx="7" cy="7" r="1.900" fill="#1e8a34"/></svg>
<svg class="a" style="left:399px;top:390px" width="14" height="14" viewBox="0 0 14 14"><rect width="14" height="14" fill="#ff9a00"/><path d="M2 9.200C2 5 8 0.500 12.200 2 13 5 10.500 12 6 12.300 3.500 12.300 2 11 2 9.200z" fill="#fff"/><circle cx="6" cy="8.500" r="2.400" fill="#ff9a00"/></svg>
<div class="t b" style="right:1391px;top:390px;color:#ffee00;font-size:9.400px;letter-spacing:.05px">&lt;XAxis</div>
<div class="a" style="left:1px;top:405px;width:480px;height:16px;background:#4b4b4b"></div>
<svg class="a" style="left:46px;top:409px" width="10" height="10" viewBox="0 0 10 10"><path d="M0.600 1.200h8.600L4.900 9.400z" fill="#6d6d6d"/></svg>
<svg class="a" style="left:60px;top:406px" width="14" height="15" viewBox="0 0 14 15"><path d="M7 0.500L13.300 3.300 7 6.300 0.700 3.300z" fill="#a8a8a8"/><path d="M0.700 3.300L7 6.300V14.300L0.700 11z" fill="#7c7c7c"/><path d="M13.300 3.300L7 6.300V14.300L13.300 11z" fill="#5c5c5c"/></svg>
<div class="t" style="left:77px;top:407px;color:#e4e4e4">YAxis</div>
<svg class="a" style="left:434px;top:407px" width="13" height="12" viewBox="0 0 13 12" fill="none" stroke="#8e8e8e"><rect x="1.100" y="0.800" width="10.400" height="10.400" rx=".4" stroke-width="1.400"/><path d="M3.200 5.600L5.600 8.800 10.400 2.400" stroke-width="1.700"/></svg>
<svg class="a" style="left:451px;top:406px" width="10" height="13" viewBox="0 0 10 13"><path d="M1.700 6V3.600a2.600 2.600 0 0 1 5-0.800" fill="none" stroke="#8e8e8e" stroke-width="1.300"/><rect x="0.600" y="5.800" width="8.400" height="6.400" fill="#8e8e8e"/></svg>
<svg class="a" style="left:417px;top:408px" width="10" height="9" viewBox="0 0 10 9"><path d="M5 0.300L9.600 8.400H0.400z" fill="#8c8c8c"/></svg>
<svg class="a" style="left:367px;top:406px" width="14" height="14" viewBox="0 0 14 14"><rect width="14" height="14" fill="#ff5200"/><g fill="none" stroke="#fff" stroke-width="1.500" stroke-linecap="round"><rect x="5.700" y="1.700" width="4" height="6.600" rx="2" transform="rotate(45 7.700 5)"/><rect x="4.300" y="5.700" width="4" height="6.600" rx="2" transform="rotate(45 6.300 9)"/></g></svg>
<svg class="a" style="left:383px;top:406px" width="14" height="14" viewBox="0 0 14 14"><rect width="14" height="14" fill="#1e8a34"/><path d="M12.49 5.89L12.49 8.11L10.71 8.48L10.68 8.58L11.67 10.09L10.09 11.67L8.58 10.68L8.48 10.71L8.11 12.49L5.89 12.49L5.52 10.71L5.42 10.68L3.91 11.67L2.33 10.09L3.32 8.58L3.29 8.48L1.51 8.11L1.51 5.89L3.29 5.52L3.32 5.42L2.33 3.91L3.91 2.33L5.42 3.32L5.52 3.29L5.89 1.51L8.11 1.51L8.48 3.29L8.58 3.32L10.09 2.33L11.67 3.91L10.68 5.42L10.71 5.52z" fill="#fff"/><circle cx="7" cy="7" r="1.900" fill="#1e8a34"/></svg>
<svg class="a" style="left:399px;top:406px" width="14" height="14" viewBox="0 0 14 14"><rect width="14" height="14" fill="#ff9a00"/><path d="M2 9.200C2 5 8 0.500 12.200 2 13 5 10.500 12 6 12.300 3.500 12.300 2 11 2 9.200z" fill="#fff"/><circle cx="6" cy="8.500" r="2.400" fill="#ff9a00"/></svg>
<div class="t b" style="right:1391px;top:406px;color:#ffee00;font-size:9.400px;letter-spacing:.05px">&lt;YAxis</div>
<svg class="a" style="left:61px;top:424px" width="10" height="10" viewBox="0 0 10 10"><path d="M1.200 0.600v8.800L9 5z" fill="#6d6d6d"/></svg>
<svg class="a" style="left:74px;top:422px" width="14" height="15" viewBox="0 0 14 15"><path d="M7 0.500L13.300 3.300 7 6.300 0.700 3.300z" fill="#a8a8a8"/><path d="M0.700 3.300L7 6.300V14.300L0.700 11z" fill="#7c7c7c"/><path d="M13.300 3.300L7 6.300V14.300L13.300 11z" fill="#5c5c5c"/></svg>
<div class="t" style="left:91px;top:423px;color:#b4b4b4">Gripper</div>
<svg class="a" style="left:434px;top:423px" width="13" height="12" viewBox="0 0 13 12" fill="none" stroke="#8e8e8e"><rect x="1.100" y="0.800" width="10.400" height="10.400" rx=".4" stroke-width="1.400"/><path d="M3.200 5.600L5.600 8.800 10.400 2.400" stroke-width="1.700"/></svg>
<svg class="a" style="left:451px;top:422px" width="10" height="13" viewBox="0 0 10 13"><path d="M1.700 6V3.600a2.600 2.600 0 0 1 5-0.800" fill="none" stroke="#8e8e8e" stroke-width="1.300"/><rect x="0.600" y="5.800" width="8.400" height="6.400" fill="#8e8e8e"/></svg>
<svg class="a" style="left:417px;top:424px" width="10" height="9" viewBox="0 0 10 9"><path d="M5 0.300L9.600 8.400H0.400z" fill="#8c8c8c"/></svg>
<svg class="a" style="left:367px;top:422px" width="14" height="14" viewBox="0 0 14 14"><rect width="14" height="14" fill="#ff5200"/><g fill="none" stroke="#fff" stroke-width="1.500" stroke-linecap="round"><rect x="5.700" y="1.700" width="4" height="6.600" rx="2" transform="rotate(45 7.700 5)"/><rect x="4.300" y="5.700" width="4" height="6.600" rx="2" transform="rotate(45 6.300 9)"/></g></svg>
<svg class="a" style="left:383px;top:422px" width="14" height="14" viewBox="0 0 14 14"><rect width="14" height="14" fill="#1e8a34"/><path d="M12.49 5.89L12.49 8.11L10.71 8.48L10.68 8.58L11.67 10.09L10.09 11.67L8.58 10.68L8.48 10.71L8.11 12.49L5.89 12.49L5.52 10.71L5.42 10.68L3.91 11.67L2.33 10.09L3.32 8.58L3.29 8.48L1.51 8.11L1.51 5.89L3.29 5.52L3.32 5.42L2.33 3.91L3.91 2.33L5.42 3.32L5.52 3.29L5.89 1.51L8.11 1.51L8.48 3.29L8.58 3.32L10.09 2.33L11.67 3.91L10.68 5.42L10.71 5.52z" fill="#fff"/><circle cx="7" cy="7" r="1.900" fill="#1e8a34"/></svg>
<svg class="a" style="left:399px;top:422px" width="14" height="14" viewBox="0 0 14 14"><rect width="14" height="14" fill="#ff9a00"/><path d="M2 9.200C2 5 8 0.500 12.200 2 13 5 10.500 12 6 12.300 3.500 12.300 2 11 2 9.200z" fill="#fff"/><circle cx="6" cy="8.500" r="2.400" fill="#ff9a00"/></svg>
<div class="t b" style="right:1391px;top:422px;color:#ffee00;font-size:9.400px;letter-spacing:.05px">&lt;Gripper</div>
<!-- scene panel -->
<div class="tab" style="left:486px;width:52px"></div>
<div class="t" style="left:492px;top:85px;letter-spacing:.2px">Scene</div>
<svg class="a" style="left:548px;top:86px" width="11" height="11" viewBox="0 0 11 11" fill="none" stroke="#a8a8a8"><path d="M3 3.500V2.300a1.800 1.800 0 0 1 3.600 0" stroke-width="1"/><rect x="1.500" y="3.500" width="7" height="6.500" fill="#a8a8a8" stroke="none"/><path d="M6.500 1.500h3v2" stroke-width="1"/></svg>
<div class="t" style="left:563px;top:85px;letter-spacing:.15px">Asset Store</div>
<svg class="a" style="left:647px;top:87px" width="12" height="11" viewBox="0 0 12 11" fill="#b4b4b4"><rect x="1" y="0.500" width="3.200" height="3"/><rect x="6.500" y="0.500" width="3.200" height="3"/><rect x="6.500" y="6.500" width="3.200" height="3"/><path d="M0 5.500l4 2.500-4 2.500z" fill="#eee"/></svg>
<div class="t" style="left:662px;top:85px;letter-spacing:.2px">Animator</div>
<svg class="a" style="left:1320px;top:90px" width="15" height="8" viewBox="0 0 15 8" fill="#9a9a9a"><path d="M0 1h5l-2.500 3z"/><rect x="6" y="0" width="8" height="1.200"/><rect x="6" y="2.200" width="8" height="1.200"/><rect x="6" y="4.400" width="8" height="1.200"/></svg>
<div class="tb" style="left:485px;top:100px;width:853px;height:17px"></div>
<div class="t s9" style="left:496px;top:101px">Shaded</div>
<div class="a" style="left:602px;top:107px;border:3px solid transparent;border-top:3px solid #999"></div>
<div class="a" style="left:611px;top:101px;width:1px;height:15px;background:#252525"></div>
<div class="a" style="left:616px;top:101px;width:1px;height:15px;background:#252525"></div>
<div class="a" style="left:490px;top:101px;width:1px;height:15px;background:#252525"></div>
<div class="t s9" style="left:620px;top:101px">2D</div>
<div class="a" style="left:646px;top:101px;width:1px;height:15px;background:#252525"></div>
<div class="a" style="left:647px;top:100px;width:27px;height:16px;background:linear-gradient(#565656,#484848)"></div>
<div class="a" style="left:674px;top:101px;width:1px;height:15px;background:#252525"></div>
<div class="a" style="left:701px;top:101px;width:1px;height:15px;background:#252525"></div>
<svg class="a" style="left:653px;top:101px" width="15" height="15" viewBox="0 0 15 15"><circle cx="7.500" cy="7.500" r="2.600" fill="#fff"/><g stroke="#fff" stroke-width="1.200"><path d="M11.30 7.50L13.50 7.50"/><path d="M10.19 10.19L11.74 11.74"/><path d="M7.50 11.30L7.50 13.50"/><path d="M4.81 10.19L3.26 11.74"/><path d="M3.70 7.50L1.50 7.50"/><path d="M4.81 4.81L3.26 3.26"/><path d="M7.50 3.70L7.50 1.50"/><path d="M10.19 4.81L11.74 3.26"/></g></svg>
<svg class="a" style="left:680px;top:102px" width="15" height="12" viewBox="0 0 15 12" fill="none" stroke="#b4b4b4" stroke-width="1"><path d="M0.500 4.500h2.500l3-3v9l-3-3h-2.500z" fill="#b4b4b4" stroke="none"/><path d="M8 4a3 3 0 0 1 0 4M10 2.500a5 5 0 0 1 0 7M12 1a7.500 7.500 0 0 1 0 10"/></svg>
<svg class="a" style="left:707px;top:103px" width="13" height="10" viewBox="0 0 13 10"><rect x="0" y="0" width="13" height="10" fill="#b4b4b4"/><path d="M1 9V6.500L4.500 2.500 7.500 5.500 9.500 4l2.500 2.500V9z" fill="#1a1a1a"/></svg>
<div class="a" style="left:724px;top:101px;width:1px;height:14px;background:#555"></div>
<div class="a" style="left:727px;top:107px;border:3px solid transparent;border-top:3px solid #999"></div>
<div class="a" style="left:1062px;top:101px;width:1px;height:15px;background:#2a2a2a"></div>
<div class="t s9" style="left:1069px;top:101px">Gizmos</div>
<div class="a" style="left:1110px;top:107px;border:3px solid transparent;border-top:3px solid #999"></div>
<div class="a" style="left:1119px;top:101px;width:1px;height:15px;background:#2a2a2a"></div>
<div class="sr" style="left:1126px;top:102px;width:205px;height:13px"></div>
<svg class="a" style="left:1131px;top:103px" width="12" height="11" viewBox="0 0 12 11" fill="none" stroke="#7a7a7a" stroke-width="1.200"><circle cx="3.800" cy="4.300" r="2.600"/><path d="M5.700 6.300l2.300 2.500"/><path d="M8 3.500h3.400l-1.700 2z" fill="#7a7a7a" stroke="none"/></svg>
<div class="t s9" style="left:1142px;top:100px;color:#6e6e6e">All</div>
<svg class="a" style="left:485px;top:117px" width="853" height="566" viewBox="485 117 853 566">
<defs><radialGradient id="sh" cx=".5" cy=".5" r=".5"><stop offset="0" stop-color="#ee9458" stop-opacity=".42"/><stop offset=".6" stop-color="#f09c60" stop-opacity=".2"/><stop offset="1" stop-color="#f5b070" stop-opacity="0"/></radialGradient><linearGradient id="bg" x1="0" y1="0" x2="1" y2="1"><stop offset="0" stop-color="#fedaa0"/><stop offset=".5" stop-color="#fdd89e"/><stop offset="1" stop-color="#fcd69a"/></linearGradient><linearGradient id="pole" x1="0" y1="0" x2="1" y2="0"><stop offset="0" stop-color="#e8e8e8"/><stop offset=".35" stop-color="#ffffff"/><stop offset=".75" stop-color="#f2f2f2"/><stop offset="1" stop-color="#b8b8b8"/></linearGradient><filter id="nz" x="0" y="0" width="100%" height="100%"><feTurbulence type="fractalNoise" baseFrequency=".6" numOctaves="1" seed="3"/><feColorMatrix values="0 0 0 0 1  0 0 0 0 .95  0 0 0 0 .8  0 0 0 1.6 -.55"/></filter><filter id="nz2" x="0" y="0" width="100%" height="100%"><feTurbulence type="fractalNoise" baseFrequency=".07" numOctaves="2" seed="8"/><feColorMatrix values="0 0 0 0 .95  0 0 0 0 .68  0 0 0 0 .38  0 0 0 3 -1.55"/></filter></defs>
<rect x="485" y="117" width="853" height="566" fill="url(#bg)"/>
<rect x="485" y="117" width="853" height="566" filter="url(#nz2)" opacity=".85"/>
<rect x="485" y="117" width="853" height="566" filter="url(#nz)" opacity=".5"/>
<path d="M485 -404.0L1338 -992.6M485 -335.5L1338 -924.1M485 -267.0L1338 -855.6M485 -198.5L1338 -787.1M485 -130.0L1338 -718.6M485 -61.5L1338 -650.1M485 7.0L1338 -581.6M485 75.5L1338 -513.1M485 144.0L1338 -444.6M485 212.5L1338 -376.1M485 281.0L1338 -307.6M485 349.5L1338 -239.1M485 418.0L1338 -170.6M485 486.5L1338 -102.1M485 555.0L1338 -33.6M485 623.5L1338 34.9M485 692.0L1338 103.4M485 760.5L1338 171.9M485 829.0L1338 240.4M485 897.5L1338 308.9M485 966.0L1338 377.4M485 1034.5L1338 445.9M485 -236.1L1338 -0.7M485 -195.3L1338 40.1M485 -154.5L1338 80.9M485 -113.7L1338 121.7M485 -72.9L1338 162.5M485 -32.1L1338 203.3M485 8.7L1338 244.1M485 49.5L1338 284.9M485 90.3L1338 325.7M485 131.1L1338 366.5M485 171.9L1338 407.3M485 212.7L1338 448.1M485 253.5L1338 488.9M485 294.3L1338 529.7M485 335.1L1338 570.5M485 375.9L1338 611.3M485 416.7L1338 652.1M485 457.5L1338 692.9M485 498.3L1338 733.7M485 539.1L1338 774.5M485 579.9L1338 815.3M485 620.7L1338 856.1M485 661.5L1338 896.9M485 702.3L1338 937.7" stroke="#d88870" stroke-width=".7" fill="none" opacity=".4"/>
<ellipse cx="828" cy="362" rx="108" ry="64" fill="url(#sh)"/>
<path d="M737.6 302.7L788.1 316.5" stroke="#a8988a" stroke-width="0.8" fill="none" />
<path d="M785.9 391.0L815.7 369.4" stroke="#a8a090" stroke-width="0.8" fill="none" />
<polygon points="877.7,239.0 894.3,239.0 894.3,395.1 877.7,395.1" fill="url(#pole)" />
<polygon points="861.6,409.4 868.0,403.3 867.1,389.9 877.7,383.7 877.7,391.4 894.3,391.4 894.3,382.6 905.7,389.6 906.8,402.8 910.8,406.1 910.8,410.9 891.9,421.9 861.6,414.5" fill="#171717" />
<polygon points="867.1,389.9 877.7,383.7 877.7,391.4 894.3,391.4 894.3,382.6 905.7,389.6 891.0,396.9" fill="#262626" />
<polygon points="861.6,409.4 868.0,403.3 891.0,411.6 906.8,402.8 910.8,406.1 891.9,416.7" fill="#2b2b2b" />
<ellipse cx="887.3" cy="413.4" rx="0.92" ry="0.64" fill="#444" transform="rotate(0 887.3 413.4)" />
<ellipse cx="879.9" cy="395.1" rx="0.73" ry="0.55" fill="#3a3a3a" transform="rotate(0 879.9 395.1)" />
<polygon points="820.3,176.6 844.3,180.2 844.3,311.7 820.3,306.0" fill="#1a64b8" />
<polygon points="844.3,180.2 850.8,177.5 850.8,305.1 844.3,311.7" fill="#2c80de" />
<polygon points="820.3,305.1 845.1,310.6 845.1,314.6 821.6,309.9" fill="#151515" />
<polygon points="845.1,303.6 856.1,301.4 857.2,310.6 846.9,314.6 845.1,311.7" fill="#1d1d1d" />
<ellipse cx="850.2" cy="303.6" rx="0.92" ry="0.92" fill="#cfcfcf" transform="rotate(0 850.2 303.6)" />
<ellipse cx="823.9" cy="257.3" rx="1.29" ry="1.29" fill="#cdd6e4" transform="rotate(0 823.9 257.3)" />
<ellipse cx="840.5" cy="262.1" rx="1.29" ry="1.29" fill="#cdd6e4" transform="rotate(0 840.5 262.1)" />
<ellipse cx="823.4" cy="251.5" rx="0.92" ry="0.73" fill="#2a8cf0" transform="rotate(0 823.4 251.5)" />
<ellipse cx="840.5" cy="256.6" rx="0.92" ry="0.73" fill="#2a8cf0" transform="rotate(0 840.5 256.6)" />
<ellipse cx="823.9" cy="269.5" rx="1.29" ry="1.29" fill="#cdd6e4" transform="rotate(0 823.9 269.5)" />
<ellipse cx="840.5" cy="274.2" rx="1.29" ry="1.29" fill="#cdd6e4" transform="rotate(0 840.5 274.2)" />
<ellipse cx="823.4" cy="263.6" rx="0.92" ry="0.73" fill="#2a8cf0" transform="rotate(0 823.4 263.6)" />
<ellipse cx="840.5" cy="268.7" rx="0.92" ry="0.73" fill="#2a8cf0" transform="rotate(0 840.5 268.7)" />
<ellipse cx="823.9" cy="281.6" rx="1.29" ry="1.29" fill="#cdd6e4" transform="rotate(0 823.9 281.6)" />
<ellipse cx="840.5" cy="286.4" rx="1.29" ry="1.29" fill="#cdd6e4" transform="rotate(0 840.5 286.4)" />
<ellipse cx="823.4" cy="275.7" rx="0.92" ry="0.73" fill="#2a8cf0" transform="rotate(0 823.4 275.7)" />
<ellipse cx="840.5" cy="280.8" rx="0.92" ry="0.73" fill="#2a8cf0" transform="rotate(0 840.5 280.8)" />
<ellipse cx="823.9" cy="293.7" rx="1.29" ry="1.29" fill="#cdd6e4" transform="rotate(0 823.9 293.7)" />
<ellipse cx="840.5" cy="298.5" rx="1.29" ry="1.29" fill="#cdd6e4" transform="rotate(0 840.5 298.5)" />
<ellipse cx="823.4" cy="287.8" rx="0.92" ry="0.73" fill="#2a8cf0" transform="rotate(0 823.4 287.8)" />
<ellipse cx="840.5" cy="293.0" rx="0.92" ry="0.73" fill="#2a8cf0" transform="rotate(0 840.5 293.0)" />
<polygon points="826.7,311.5 846.9,314.6 847.8,329.3 841.4,331.9 827.6,327.1" fill="#5c5c5c" />
<polygon points="826.7,311.5 836.8,313.2 837.3,330.1 827.6,327.1" fill="#8e8e8e" />
<polygon points="846.9,314.6 856.1,310.6 856.4,314.3 847.8,319.8" fill="#8a8a8a" />
<polygon points="839.6,329.3 848.7,326.2 848.7,338.5 840.5,340.3" fill="#c6be22" />
<polygon points="826.7,330.8 839.9,333.0 839.9,349.2 836.2,352.1 832.6,350.6 828.5,344.0" fill="#161616" />
<ellipse cx="832.2" cy="335.6" rx="1.10" ry="1.10" fill="#e8e8e8" transform="rotate(0 832.2 335.6)" />
<ellipse cx="832.6" cy="341.3" rx="1.10" ry="1.10" fill="#e8e8e8" transform="rotate(0 832.6 341.3)" />
<ellipse cx="837.0" cy="341.1" rx="0.92" ry="0.92" fill="#dcdcdc" transform="rotate(0 837.0 341.1)" />
<ellipse cx="835.9" cy="348.8" rx="0.73" ry="0.73" fill="#777" transform="rotate(0 835.9 348.8)" />
<path d="M862.5 246.3L862.5 257.3" stroke="#ff7cf0" stroke-width="1.1" fill="none" />
<path d="M862.5 273.0L862.5 336.3" stroke="#a8f068" stroke-width="0.9" fill="none" />
<polygon points="862.5,256.1 857.4,271.7 868.7,271.7" fill="#4cf01e" />
<polygon points="862.5,256.1 859.8,271.7 857.4,271.7" fill="#8cfa6a" />
<ellipse cx="863.1" cy="271.9" rx="5.69" ry="1.84" fill="#6af048" transform="rotate(0 863.1 271.9)" />
<polygon points="846.9,330.8 861.6,324.9 873.5,329.0 862.5,336.7" fill="rgba(255,255,90,.55)" stroke="#d4ee30" stroke-width=".8"/>
<polygon points="846.3,334.1 862.5,336.7 862.5,354.7 846.9,350.1" fill="rgba(255,176,190,.6)" stroke="#5a70f0" stroke-width=".8"/>
<polygon points="862.5,336.7 873.5,329.3 873.5,348.2 862.5,354.7" fill="rgba(255,214,176,.55)" stroke="#f0623a" stroke-width=".8"/>
<path d="M804.3 320.9L846.9 331.0" stroke="#f0421e" stroke-width="0.9" fill="none" />
<polygon points="787.0,316.3 800.6,313.7 804.8,325.5" fill="#cc2a18" />
<ellipse cx="802.5" cy="319.6" rx="2.39" ry="6.06" fill="#a21c10" transform="rotate(-16 802.5 319.6)" />
<path d="M829.3 360.4L862.7 336.3" stroke="#4a62ff" stroke-width="0.9" fill="none" />
<polygon points="814.6,369.9 820.1,358.7 829.6,366.4" fill="#1b49f6" />
<ellipse cx="824.9" cy="362.4" rx="5.69" ry="4.04" fill="#2a58ff" transform="rotate(40 824.9 362.4)" />
<polygon points="718.4,297.4 734.5,294.8 736.2,307.5" fill="#a89a84" />
<ellipse cx="735.3" cy="301.2" rx="2.20" ry="6.43" fill="#8c7e6a" transform="rotate(-8 735.3 301.2)" />
<polygon points="771.1,399.1 777.9,387.0 786.9,396.9" fill="#b2a28c" />
<ellipse cx="782.3" cy="391.9" rx="5.69" ry="4.04" fill="#a09078" transform="rotate(40 782.3 391.9)" />
<polygon points="750.3,179.0 766.8,169.1 769.6,170.3 765.2,176.9 765.2,201.6 755.3,203.9 750.3,202.3" fill="#2b2b2b" />
<polygon points="750.3,179.0 761.1,173.2 765.2,176.9 765.2,201.6 755.3,203.9 750.3,202.3" fill="#222" />
<polygon points="765.2,171.5 769.3,170.2 821.0,184.7 821.0,191.9 765.2,178.1" fill="#f0622a" />
<polygon points="765.2,178.1 821.0,191.9 821.0,222.4 807.5,220.1 765.2,201.6" fill="#a63a18" />
<polygon points="765.2,171.5 770.7,173.2 770.7,200.2 765.2,201.6" fill="#e4501e" />
<polygon points="765.2,196.6 804.0,209.0 804.0,213.1 765.2,201.8" fill="#e2511f" />
<polygon points="769.9,178.6 805.7,188.9 805.7,191.7 769.9,181.6" fill="#cfcfcf" />
<polygon points="769.9,193.7 802.2,202.7 802.2,206.5 769.9,197.5" fill="#f4f4f4" />
<ellipse cx="762.3" cy="178.4" rx="1.64" ry="1.64" fill="#c8c8c8" transform="rotate(0 762.3 178.4)" />
<ellipse cx="763.2" cy="196.4" rx="1.29" ry="1.29" fill="#c8c8c8" transform="rotate(0 763.2 196.4)" />
<polygon points="802.2,191.5 811.6,186.1 815.3,187.7 815.3,191.0 807.6,195.0 807.6,220.3 802.2,216.8" fill="#1f1f1f" />
<polygon points="807.6,195.0 820.0,191.0 820.0,222.7 807.6,220.3" fill="#d64a1c" />
<polygon points="807.6,195.0 820.0,191.0 820.0,193.1 807.6,197.3" fill="#ec6230" />
<ellipse cx="815.7" cy="200.2" rx="0.59" ry="0.59" fill="#f08a60" transform="rotate(0 815.7 200.2)" />
<ellipse cx="815.7" cy="217.8" rx="0.59" ry="0.59" fill="#f08a60" transform="rotate(0 815.7 217.8)" />
<polygon points="872.6,199.2 896.7,206.0 896.7,209.3 872.6,202.7" fill="#e2511f" />
<polygon points="871.4,178.8 878.5,173.2 906.6,180.2 906.6,212.1 901.9,215.4 896.7,206.3 872.6,199.2" fill="#2a2a2a" />
<polygon points="871.4,178.8 878.5,173.2 906.6,180.2 897.8,186.3" fill="#343434" />
<polygon points="897.8,186.3 906.6,180.2 906.6,212.1 901.9,215.4 897.8,207.2" fill="#3a3a3a" />
<ellipse cx="884.6" cy="182.3" rx="8.45" ry="4.93" fill="#c9c9c9" transform="rotate(4 884.6 182.3)" />
<ellipse cx="884.3" cy="180.0" rx="8.45" ry="4.93" fill="#ffffff" transform="rotate(4 884.3 180.0)" />
<polygon points="877.3,227.1 893.7,227.1 893.7,263.5 877.3,263.5" fill="url(#pole)" />
<polygon points="871.4,208.4 881.0,210.9 881.0,236.8 871.4,235.4" fill="#1c1c1c" />
<polygon points="882.7,214.5 896.3,206.3 902.2,210.7 902.2,232.1 891.6,239.1 882.7,237.7" fill="#262626" />
<polygon points="882.7,214.5 891.6,220.1 891.6,239.1 882.7,237.7" fill="#1b1b1b" />
<ellipse cx="876.1" cy="209.3" rx="1.06" ry="1.29" fill="#e2e2e2" transform="rotate(0 876.1 209.3)" />
<ellipse cx="882.9" cy="211.3" rx="1.06" ry="1.29" fill="#e2e2e2" transform="rotate(0 882.9 211.3)" />
<ellipse cx="898.4" cy="209.3" rx="1.06" ry="1.29" fill="#e2e2e2" transform="rotate(0 898.4 209.3)" />
<ellipse cx="892.5" cy="216.0" rx="1.06" ry="1.29" fill="#e2e2e2" transform="rotate(0 892.5 216.0)" />
<ellipse cx="897.2" cy="221.3" rx="1.06" ry="1.29" fill="#e2e2e2" transform="rotate(0 897.2 221.3)" />
<ellipse cx="879.6" cy="222.4" rx="1.06" ry="1.29" fill="#e2e2e2" transform="rotate(0 879.6 222.4)" />
<ellipse cx="876.7" cy="231.8" rx="1.06" ry="1.29" fill="#e2e2e2" transform="rotate(0 876.7 231.8)" />
<ellipse cx="899.0" cy="229.5" rx="1.06" ry="1.29" fill="#e2e2e2" transform="rotate(0 899.0 229.5)" />
<ellipse cx="870.0" cy="224.8" rx="1.06" ry="1.29" fill="#e2e2e2" transform="rotate(0 870.0 224.8)" />
<polygon points="819.6,168.2 844.0,176.9 844.0,263.5 821.0,263.5" fill="#1a64b8" />
<polygon points="819.6,168.2 829.2,171.8 830.4,263.5 821.0,263.5" fill="#175aa8" />
<polygon points="844.0,176.9 850.1,173.4 850.1,263.5 844.0,263.5" fill="#2c80de" />
<polygon points="848.0,174.3 855.9,172.9 855.9,180.2 850.3,184.0 848.0,182.5" fill="#1c1c1c" />
<ellipse cx="852.4" cy="178.4" rx="0.82" ry="1.06" fill="#d8d8d8" transform="rotate(0 852.4 178.4)" />
<polygon points="849.4,183.7 850.9,182.8 850.9,250.6 849.4,251.2" fill="#c9c9c9" />
<polygon points="850.9,181.6 856.9,180.2 856.9,248.5 850.9,250.8" fill="#1466c4" />
<polygon points="849.1,248.3 856.9,245.9 856.9,253.0 850.3,256.2" fill="#1c1c1c" />
<ellipse cx="852.9" cy="251.2" rx="0.70" ry="0.82" fill="#ccc" transform="rotate(0 852.9 251.2)" />
<polygon points="819.3,168.0 821.0,164.5 832.7,156.0 855.7,162.6 855.7,168.0 842.3,176.9" fill="#262626" />
<polygon points="821.0,164.5 832.7,156.0 855.7,162.6 843.3,171.5" fill="#303030" />
<ellipse cx="822.6" cy="166.1" rx="1.53" ry="1.53" fill="#e4e4e4" transform="rotate(0 822.6 166.1)" />
<ellipse cx="834.3" cy="165.9" rx="1.53" ry="1.53" fill="#e4e4e4" transform="rotate(0 834.3 165.9)" />
<ellipse cx="840.7" cy="160.3" rx="1.53" ry="1.53" fill="#e4e4e4" transform="rotate(0 840.7 160.3)" />
<ellipse cx="845.6" cy="164.9" rx="1.53" ry="1.53" fill="#e4e4e4" transform="rotate(0 845.6 164.9)" />
<ellipse cx="841.4" cy="171.1" rx="1.53" ry="1.53" fill="#e4e4e4" transform="rotate(0 841.4 171.1)" />
<ellipse cx="823.1" cy="183.7" rx="1.17" ry="1.17" fill="#d4dce8" transform="rotate(0 823.1 183.7)" />
<ellipse cx="839.3" cy="188.7" rx="1.17" ry="1.17" fill="#d4dce8" transform="rotate(0 839.3 188.7)" />
<ellipse cx="822.6" cy="190.2" rx="0.94" ry="0.70" fill="#2a90f4" transform="rotate(0 822.6 190.2)" />
<ellipse cx="839.5" cy="194.9" rx="0.94" ry="0.70" fill="#2a90f4" transform="rotate(0 839.5 194.9)" />
<ellipse cx="849.1" cy="191.4" rx="0.70" ry="0.59" fill="#2a90f4" transform="rotate(0 849.1 191.4)" />
<ellipse cx="823.1" cy="196.0" rx="1.17" ry="1.17" fill="#d4dce8" transform="rotate(0 823.1 196.0)" />
<ellipse cx="839.3" cy="201.0" rx="1.17" ry="1.17" fill="#d4dce8" transform="rotate(0 839.3 201.0)" />
<ellipse cx="822.6" cy="202.5" rx="0.94" ry="0.70" fill="#2a90f4" transform="rotate(0 822.6 202.5)" />
<ellipse cx="839.5" cy="207.2" rx="0.94" ry="0.70" fill="#2a90f4" transform="rotate(0 839.5 207.2)" />
<ellipse cx="849.1" cy="203.7" rx="0.70" ry="0.59" fill="#2a90f4" transform="rotate(0 849.1 203.7)" />
<ellipse cx="823.1" cy="208.4" rx="1.17" ry="1.17" fill="#d4dce8" transform="rotate(0 823.1 208.4)" />
<ellipse cx="839.3" cy="213.3" rx="1.17" ry="1.17" fill="#d4dce8" transform="rotate(0 839.3 213.3)" />
<ellipse cx="822.6" cy="214.8" rx="0.94" ry="0.70" fill="#2a90f4" transform="rotate(0 822.6 214.8)" />
<ellipse cx="839.5" cy="219.5" rx="0.94" ry="0.70" fill="#2a90f4" transform="rotate(0 839.5 219.5)" />
<ellipse cx="849.1" cy="216.0" rx="0.70" ry="0.59" fill="#2a90f4" transform="rotate(0 849.1 216.0)" />
<ellipse cx="823.1" cy="220.7" rx="1.17" ry="1.17" fill="#d4dce8" transform="rotate(0 823.1 220.7)" />
<ellipse cx="839.3" cy="225.6" rx="1.17" ry="1.17" fill="#d4dce8" transform="rotate(0 839.3 225.6)" />
<ellipse cx="822.6" cy="227.1" rx="0.94" ry="0.70" fill="#2a90f4" transform="rotate(0 822.6 227.1)" />
<ellipse cx="839.5" cy="231.8" rx="0.94" ry="0.70" fill="#2a90f4" transform="rotate(0 839.5 231.8)" />
<ellipse cx="849.1" cy="228.3" rx="0.70" ry="0.59" fill="#2a90f4" transform="rotate(0 849.1 228.3)" />
<ellipse cx="823.1" cy="233.0" rx="1.17" ry="1.17" fill="#d4dce8" transform="rotate(0 823.1 233.0)" />
<ellipse cx="839.3" cy="237.9" rx="1.17" ry="1.17" fill="#d4dce8" transform="rotate(0 839.3 237.9)" />
<ellipse cx="822.6" cy="239.5" rx="0.94" ry="0.70" fill="#2a90f4" transform="rotate(0 822.6 239.5)" />
<ellipse cx="839.5" cy="244.2" rx="0.94" ry="0.70" fill="#2a90f4" transform="rotate(0 839.5 244.2)" />
<ellipse cx="849.1" cy="240.6" rx="0.70" ry="0.59" fill="#2a90f4" transform="rotate(0 849.1 240.6)" />
<ellipse cx="823.1" cy="245.3" rx="1.17" ry="1.17" fill="#d4dce8" transform="rotate(0 823.1 245.3)" />
<ellipse cx="839.3" cy="250.3" rx="1.17" ry="1.17" fill="#d4dce8" transform="rotate(0 839.3 250.3)" />
<ellipse cx="822.6" cy="251.8" rx="0.94" ry="0.70" fill="#2a90f4" transform="rotate(0 822.6 251.8)" />
<ellipse cx="839.5" cy="256.5" rx="0.94" ry="0.70" fill="#2a90f4" transform="rotate(0 839.5 256.5)" />
<ellipse cx="849.1" cy="253.0" rx="0.70" ry="0.59" fill="#2a90f4" transform="rotate(0 849.1 253.0)" />
<ellipse cx="823.1" cy="257.6" rx="1.17" ry="1.17" fill="#d4dce8" transform="rotate(0 823.1 257.6)" />
<ellipse cx="839.3" cy="262.6" rx="1.17" ry="1.17" fill="#d4dce8" transform="rotate(0 839.3 262.6)" />
<ellipse cx="822.6" cy="264.1" rx="0.94" ry="0.70" fill="#2a90f4" transform="rotate(0 822.6 264.1)" />
<ellipse cx="839.5" cy="268.8" rx="0.94" ry="0.70" fill="#2a90f4" transform="rotate(0 839.5 268.8)" />
<ellipse cx="849.1" cy="265.3" rx="0.70" ry="0.59" fill="#2a90f4" transform="rotate(0 849.1 265.3)" />
<polygon points="857.3,208.4 862.7,209.1 862.7,247.3 857.3,245.9" fill="#b4b4b4" />
<polygon points="862.7,209.1 870.5,208.4 870.5,242.6 862.7,247.3" fill="#f8f8f8" />
<ellipse cx="864.4" cy="226.0" rx="0.70" ry="0.94" fill="#c0c0c0" transform="rotate(0 864.4 226.0)" />
<ellipse cx="869.7" cy="224.8" rx="0.59" ry="0.94" fill="#c0c0c0" transform="rotate(0 869.7 224.8)" />
<path d="M862.7 208.4L862.7 263.5" stroke="#ff70f0" stroke-width="1.2" fill="none" />
<polygon points="862.7,175.3 852.4,204.3 873.5,204.3" fill="#f63ee4" opacity=".93"/>
<polygon points="862.7,175.3 857.3,204.3 852.4,204.3" fill="#ff86f4" opacity=".55"/>
<ellipse cx="863.0" cy="204.6" rx="10.56" ry="3.40" fill="#ff58ee" transform="rotate(0 863.0 204.6)" opacity=".95"/>

<g>
<polygon points="1280,143 1292,143 1286.600,158.500 1285.400,158.500" fill="#45b822"/><ellipse cx="1286" cy="143" rx="6" ry="3" fill="#2f9418"/>
<polygon points="1260,155.500 1260,166.300 1277.500,165" fill="#e01410"/><polygon points="1260,162 1260,166.300 1277.500,165" fill="#8e0c08"/>
<polygon points="1268,173 1282,170 1276,181" fill="#0c2a98"/><circle cx="1271.500" cy="177.200" r="5.400" fill="#1244f4"/>
<polygon points="1296,153.500 1304.500,161 1292.500,163" fill="#a4a4a4"/><circle cx="1300.400" cy="157.900" r="5.400" fill="#c2c2c2"/>
<polygon points="1295,169.500 1308,167.500 1310,179.500" fill="#8a8a8a"/><ellipse cx="1309" cy="173.500" rx="2.800" ry="6" fill="#787878"/>
<polygon points="1280,191 1292,191 1286.500,177 1285.500,177" fill="#cfcfcf"/><ellipse cx="1286" cy="191.500" rx="6" ry="2.700" fill="#b4b4b4"/>
<polygon points="1277,163.300 1285.400,158.500 1295,162.700 1295,171.800 1287.200,176.600 1277.500,171.800" fill="#9c9c9c"/><polygon points="1277,163.300 1287.200,167.500 1287.200,176.600 1277.500,171.800" fill="#dedede"/><polygon points="1287.200,167.500 1295,162.700 1295,171.800 1287.200,176.600" fill="#8c8c8c"/>
<text x="1287" y="138" font-size="10" font-family="DejaVu Sans,sans-serif" fill="#fff" font-weight="bold">y</text>
<text x="1255" y="162" font-size="10" font-family="DejaVu Sans,sans-serif" fill="#fff" font-weight="bold" opacity=".9">x</text>
<text x="1264" y="186" font-size="10" font-family="DejaVu Sans,sans-serif" fill="#fff" font-weight="bold" opacity=".95">z</text>
<text x="1282.500" y="221.500" font-size="10.500" font-family="DejaVu Sans,sans-serif" fill="#c6cee0" opacity=".9" letter-spacing=".4">Iso</text>
<path d="M1269 214.500h9.500M1269 217.500h9.500M1269 220.500h9.500" stroke="#e6e2e0" stroke-width="1" opacity=".75"/>
<g opacity=".8"><path d="M1318 133v-2a2.200 2.200 0 0 1 4.400 0v.8" fill="none" stroke="#c8c8d0" stroke-width="1.100"/><rect x="1317" y="133" width="7" height="5" fill="#c8c8d0"/></g>
</g>
</svg>
<div class="a" style="left:1337px;top:84px;width:4px;height:873px;background:#282828"></div>
<!-- inspector -->
<div class="a" style="left:1341px;top:100px;width:413px;height:857px;background:#383838"></div>
<div class="t" style="left:1348px;top:85px;letter-spacing:.17px">game4automation.CADC...</div>
<div class="tab" style="left:1518px;width:87px"></div>
<svg class="a" style="left:1526px;top:86px" width="11" height="11" viewBox="0 0 11 11"><circle cx="5.500" cy="5.500" r="5" fill="#e8e8e8"/><path d="M4.200 4.600h2v3.600h.9v.9H4.200v-.9h.8V5.500h-.8zM4.800 2.200h1.500v1.500H4.800z" fill="#222"/></svg>
<div class="t" style="left:1541px;top:85px;letter-spacing:.35px">Inspector</div>
<div class="t" style="left:1612px;top:85px;letter-spacing:.42px">Test Runner</div>
<svg class="a" style="left:1700px;top:86px" width="52" height="13" viewBox="0 0 52 13" fill="none" stroke="#c8c8c8"><path d="M1 2.500h5M8.500 2.500h2M1 6.500h2M5.500 6.500h5M1 10.500h5.500M9 10.500h1.500" stroke-width="1.200"/><path d="M7.500 1v3M4 5v3M8 9v3" stroke-width="1.300"/><path d="M14.500 1L20 6.500 14.500 12" stroke="#8a8a8a" stroke-width="1.200"/><path d="M26.800 6V4.400a1.700 1.700 0 0 1 3.400 0V6" stroke="#9a9a9a" stroke-width="1.100"/><rect x="25.300" y="5.800" width="6.400" height="5.200" fill="#9a9a9a" stroke="none"/><path d="M35 4.500h5l-2.500 3z" fill="#9a9a9a" stroke="none"/><path d="M41 4.100h8M41 6.300h8M41 8.500h8" stroke="#9a9a9a" stroke-width="1.200"/></svg>
<div class="a" style="left:1739px;top:100px;width:15px;height:857px;background:#2d2d2d;border-left:1px solid #252525"></div>
<div class="a" style="left:1740px;top:422px;width:13px;height:518px;border-radius:6.500px;background:linear-gradient(90deg,#505050,#3d3d3d)"></div>
<div class="a" style="left:1740px;top:114px;width:13px;height:12px;border-radius:6.500px 6.500px 0 0;background:linear-gradient(#252525,#2d2d2d)"></div>
<div class="a" style="left:1742px;top:103px;border:4.500px solid transparent;border-top:none;border-bottom:7px solid #1c1c1c"></div>
<div class="a" style="left:1742px;top:948px;border:4.500px solid transparent;border-bottom:none;border-top:7px solid #1c1c1c"></div>
<div class="a" style="left:1490px;top:100px;width:242px;height:1px;background:#444"></div>
<div class="t" style="left:1356px;top:105px;letter-spacing:.17px">Move This Rigid Body</div>
<div class="cb" style="left:1495px;top:107px"></div>
<div class="a" style="left:1355px;top:123px;width:378px;height:45px;background:#4f4f4f;border-radius:3px;border:1px solid #2c2c2c"></div>
<div class="a" style="left:1356px;top:124px;width:376px;height:15px;background:#606060;border-radius:2px 2px 0 0"></div>
<div class="t" style="left:1362px;top:124px;letter-spacing:.17px">Transport Surfaces: 0</div>
<div class="t" style="left:1362px;top:143px;letter-spacing:.17px">List is Empty</div>
<div class="a" style="left:1679px;top:167px;width:54px;height:15px;background:#4f4f4f;border-radius:0 0 3px 3px;border:1px solid #2c2c2c;border-top:none"></div>
<svg class="a" style="left:1687px;top:169px" width="40" height="11" viewBox="0 0 40 11"><path d="M1 5.500h9M5.500 1v9" stroke="#e0e0e0" stroke-width="1.800"/><path d="M27 5.500h8" stroke="#8a8a8a" stroke-width="1.600"/></svg>
<div class="a" style="left:1354px;top:186px;width:381px;height:41px;background:#3b3b3b;border:1px solid #2e2e2e"></div>
<div class="t b" style="left:1360px;top:189px;color:#c8c8c8;letter-spacing:.17px">Limits</div>
<div class="t" style="left:1360px;top:207px;letter-spacing:.17px">Use Limits</div>
<div class="cb" style="left:1499px;top:209px"></div>
<div class="a" style="left:1354px;top:229px;width:381px;height:50px;background:#3b3b3b;border:1px solid #2e2e2e"></div>
<div class="t b" style="left:1360px;top:233px;color:#c8c8c8;letter-spacing:.17px">Acceleration</div>
<div class="t" style="left:1360px;top:261px;letter-spacing:.17px">Use Acceleration</div>
<div class="cb" style="left:1499px;top:263px"></div>
<div class="t b" style="left:1356px;top:292px;color:#c8c8c8;letter-spacing:.17px">Drive IO's</div>
<div class="t" style="left:1356px;top:308px;letter-spacing:.17px">Jog Forward</div>
<div class="cb" style="left:1495px;top:310px"></div>
<div class="t" style="left:1356px;top:326px;letter-spacing:.17px">Jog Backward</div>
<div class="cb" style="left:1495px;top:328px"></div>
<div class="t" style="left:1356px;top:344px;letter-spacing:.17px">Target Position</div>
<div class="fld" style="top:343px;width:241px"><span>0</span></div>
<div class="t" style="left:1356px;top:362px;letter-spacing:.17px">Target Speed</div>
<div class="fld" style="top:361px;width:241px"><span>100</span></div>
<div class="t" style="left:1356px;top:380px;letter-spacing:.17px">Target Start Move</div>
<div class="cb" style="left:1495px;top:382px"></div>
<div class="t" style="left:1356px;top:398px;letter-spacing:.17px">Reset Drive</div>
<div class="cb" style="left:1495px;top:400px"></div>
<div class="t" style="left:1356px;top:416px;letter-spacing:.17px">Stop Drive</div>
<div class="cb" style="left:1495px;top:418px"></div>
<div class="t" style="left:1356px;top:434px;color:#707070;letter-spacing:.17px">Current Speed</div>
<div class="fld" style="top:433px;width:241px;opacity:.8"><span class="dis">0</span></div>
<div class="t" style="left:1356px;top:452px;color:#707070;letter-spacing:.17px">Current Position</div>
<div class="fld" style="top:451px;width:241px;opacity:.8"><span class="dis">0</span></div>
<div class="t" style="left:1356px;top:470px;color:#707070;letter-spacing:.17px">Is Running</div>
<div class="cb" style="opacity:.55;left:1495px;top:472px"></div>
<div class="t" style="left:1356px;top:488px;color:#707070;letter-spacing:.17px">Is At Target</div>
<div class="cb" style="opacity:.55;left:1495px;top:490px"></div>
<div class="t" style="left:1356px;top:506px;color:#707070;letter-spacing:.17px">Is At Lower Limit</div>
<div class="cb" style="opacity:.55;left:1495px;top:508px"></div>
<div class="t" style="left:1356px;top:524px;color:#707070;letter-spacing:.17px">Is At Upper Limit</div>
<div class="cb" style="opacity:.55;left:1495px;top:526px"></div>
<div class="a" style="left:1341px;top:543px;width:398px;height:1px;background:#2a2a2a"></div>
<div class="a" style="left:1341px;top:544px;width:398px;height:1px;background:#444"></div>
<div class="a" style="left:1341px;top:562px;width:398px;height:1px;background:#2a2a2a"></div>
<div class="a" style="left:1341px;top:563px;width:398px;height:1px;background:#444"></div>
<svg class="a" style="left:1345px;top:548px" width="10" height="10" viewBox="0 0 10 10"><path d="M1.200 0.600v8.800L9 5z" fill="#7a7a7a"/></svg>
<svg class="a" style="left:1357px;top:546px" width="14" height="14" viewBox="0 0 14 14"><path d="M7 7V1.500" stroke="#58d848" stroke-width="1.600"/><path d="M7 0l2 3.500H5z" fill="#58d848"/><path d="M7 7L2 11.500" stroke="#4878f0" stroke-width="1.600"/><path d="M7 7l5 4" stroke="#e84030" stroke-width="1.600"/><path d="M0.800 12.600l3.200-1-2-2.200zM13.400 12.200l-3.400-.6 1.800-2.400z" fill="#e84030"/><circle cx="7" cy="7.500" r="2" fill="#f0c020"/></svg>
<div class="t b" style="left:1390px;top:547px;color:#d0d0d0;letter-spacing:.2px">Rigidbody</div>
<svg class="a" style="left:1687px;top:546px" width="50" height="14" viewBox="0 0 50 14"><rect x="1" y="1" width="11" height="12" rx="1" fill="#b8c8e0"/><rect x="2" y="1.500" width="9.500" height="10.500" fill="#3f68a8"/><rect x="2" y="1.500" width="2" height="10.500" fill="#284a84"/><text x="5.500" y="10.500" font-size="8" font-weight="bold" font-family="DejaVu Sans,sans-serif" fill="#fff">?</text><g fill="none" stroke="#c0c0c0" stroke-width="1.300"><path d="M19 4.500h5M27 4.500h3M19 10.500h2M24 10.500h6"/><path d="M26 1.500v5M22.500 8v5" stroke-width="1.600"/></g><g transform="translate(42 6.500)"><circle r="3.600" fill="none" stroke="#c0c0c0" stroke-width="2.200" stroke-dasharray="1.700 1.130"/><circle r="2.600" fill="none" stroke="#c0c0c0" stroke-width="1.400"/></g><path d="M46.500 9.500h3.600l-1.800 2.600z" fill="#c0c0c0"/></svg>
<svg class="a" style="left:1344px;top:568px" width="10" height="10" viewBox="0 0 10 10"><path d="M0.600 1.200h8.800L5 9z" fill="#7a7a7a"/></svg>
<svg class="a" style="left:1358px;top:565px" width="12" height="15" viewBox="0 0 12 15"><path d="M1 0.500h7l3 3v11H1z" fill="#e8eef8" stroke="#8a9ab4" stroke-width=".8"/><text x="1.800" y="11" font-size="6.500" font-weight="bold" font-family="DejaVu Sans,sans-serif" fill="#3a78c8" letter-spacing="-.5">c#</text></svg>
<div class="cb" style="left:1375px;top:568px"></div>
<svg class="a" style="left:1375px;top:566px" width="14" height="14" viewBox="0 0 14 14"><path d="M2.500 6.500L5.800 10.500 12 1.500" fill="none" stroke="#fff" stroke-width="2"/></svg>
<div class="t b" style="left:1390px;top:566px;color:#d0d0d0;letter-spacing:.2px">CAM (Script)</div>
<svg class="a" style="left:1687px;top:565px" width="50" height="14" viewBox="0 0 50 14"><rect x="1" y="1" width="11" height="12" rx="1" fill="#b8c8e0"/><rect x="2" y="1.500" width="9.500" height="10.500" fill="#3f68a8"/><rect x="2" y="1.500" width="2" height="10.500" fill="#284a84"/><text x="5.500" y="10.500" font-size="8" font-weight="bold" font-family="DejaVu Sans,sans-serif" fill="#fff">?</text><g fill="none" stroke="#c0c0c0" stroke-width="1.300"><path d="M19 4.500h5M27 4.500h3M19 10.500h2M24 10.500h6"/><path d="M26 1.500v5M22.500 8v5" stroke-width="1.600"/></g><g transform="translate(42 6.500)"><circle r="3.600" fill="none" stroke="#c0c0c0" stroke-width="2.200" stroke-dasharray="1.700 1.130"/><circle r="2.600" fill="none" stroke="#c0c0c0" stroke-width="1.400"/></g><path d="M46.500 9.500h3.600l-1.800 2.600z" fill="#c0c0c0"/></svg>
<div class="t" style="left:1356px;top:582px;color:#707070;letter-spacing:.17px">Script</div>
<div class="fld" style="top:581px;width:223px;opacity:.85"><span style="left:15px" class="dis">CAM</span></div>
<svg class="a" style="left:1498px;top:584px" width="9" height="11" viewBox="0 0 9 11" opacity=".6"><path d="M0.500 0.500h5.500l2.500 2.500v7.500h-8z" fill="#dde4f0"/><text x="1" y="8.500" font-size="5" font-weight="bold" font-family="DejaVu Sans,sans-serif" fill="#3a78c8">c#</text></svg>
<svg class="a" style="left:1723px;top:584px" width="10" height="10" viewBox="0 0 10 10"><circle cx="5" cy="5" r="3.600" fill="none" stroke="#6a6a6a" stroke-width="1.100"/><circle cx="5" cy="5" r="1.400" fill="#6a6a6a"/></svg>
<div class="t" style="left:1356px;top:600px;letter-spacing:.17px">Name</div>
<div class="fld" style="top:599px;width:241px"><span></span></div>
<div class="t" style="left:1356px;top:618px;letter-spacing:.17px">Master Drive</div>
<div class="fld" style="top:617px;width:223px"><span style="left:15px">MasterAxis (Drive)</span></div>
<svg class="a" style="left:1498px;top:620px" width="9" height="11" viewBox="0 0 9 11"><path d="M0.500 0.500h5.500l2.500 2.500v7.500h-8z" fill="#dde4f0"/><text x="1" y="8.500" font-size="5" font-weight="bold" font-family="DejaVu Sans,sans-serif" fill="#3a78c8">c#</text></svg>
<svg class="a" style="left:1723px;top:620px" width="10" height="10" viewBox="0 0 10 10"><circle cx="5" cy="5" r="3.600" fill="none" stroke="#b8b8b8" stroke-width="1.100"/><circle cx="5" cy="5" r="1.400" fill="#b8b8b8"/></svg>
<div class="a" style="left:1356px;top:636px;width:136px;height:16px;overflow:hidden"><div class="t" style="left:0;top:0">Master Drive Axis Scale</div></div>
<div class="fld" style="top:635px;width:241px"><span>1</span></div>
<div class="a" style="left:1356px;top:654px;width:136px;height:16px;overflow:hidden"><div class="t" style="left:0;top:0">Master Drive Axis Offset</div></div>
<div class="fld" style="top:653px;width:241px"><span>0</span></div>
<div class="t" style="left:1356px;top:672px;letter-spacing:.17px">CAM Axis Scale</div>
<div class="fld" style="top:671px;width:241px"><span>1</span></div>
<div class="t" style="left:1356px;top:690px;letter-spacing:.17px">CAM Axis Offset</div>
<div class="fld" style="top:689px;width:241px"><span>0</span></div>
<div class="t" style="left:1356px;top:708px;letter-spacing:.17px">Cam Curve</div>
<svg class="a" style="left:1494px;top:707px" width="241" height="16" viewBox="0 0 241 16"><rect width="241" height="16" fill="#4d4d4d"/><rect width="241" height="1" fill="#2a2a2a"/><path d="M1.500 13.500H16C22 13.500 25 2 31.500 1.500H83C91 2 93 11.500 101.500 11.500H120C127 11.500 128 2 135.500 1.500H219C226 2 228 13.500 235.500 13.500H240" fill="none" stroke="#00e800" stroke-width="1.100"/></svg>
<div class="t" style="left:1356px;top:726px;letter-spacing:.17px">Cam Defintion</div>
<div class="fld" style="top:725px;width:223px"><span style="left:15px">cam</span></div>
<svg class="a" style="left:1498px;top:728px" width="9" height="11" viewBox="0 0 9 11"><path d="M0.500 0.500h5.500l2.500 2.500v7.500h-8z" fill="#e4e4e4"/><path d="M2 4.500h5M2 6.500h5M2 8.500h5" stroke="#8a8a8a" stroke-width=".8"/></svg>
<svg class="a" style="left:1723px;top:728px" width="10" height="10" viewBox="0 0 10 10"><circle cx="5" cy="5" r="3.600" fill="none" stroke="#b8b8b8" stroke-width="1.100"/><circle cx="5" cy="5" r="1.400" fill="#b8b8b8"/></svg>
<div class="t" style="left:1356px;top:744px;letter-spacing:.17px">Use Column Names</div>
<div class="cb" style="left:1495px;top:746px"></div>
<svg class="a" style="left:1495px;top:744px" width="14" height="14" viewBox="0 0 14 14"><path d="M2.500 6.500L5.800 10.500 12 1.500" fill="none" stroke="#fff" stroke-width="2"/></svg>
<div class="t" style="left:1356px;top:762px;letter-spacing:.17px">Master Column</div>
<div class="fld" style="top:761px;width:241px"><span>Degrees</span></div>
<div class="t" style="left:1356px;top:780px;letter-spacing:.17px">Slave Column</div>
<div class="fld" style="top:779px;width:241px"><span>YAxis</span></div>
<div class="t" style="left:1356px;top:798px;letter-spacing:.17px">Use Column Numbers</div>
<div class="cb" style="left:1495px;top:800px"></div>
<svg class="a" style="left:1495px;top:798px" width="14" height="14" viewBox="0 0 14 14"><path d="M2.500 6.500L5.800 10.500 12 1.500" fill="none" stroke="#fff" stroke-width="2"/></svg>
<div class="t" style="left:1356px;top:816px;letter-spacing:.17px">Master Column Num</div>
<div class="fld" style="top:815px;width:241px"><span>1</span></div>
<div class="t" style="left:1356px;top:834px;letter-spacing:.17px">Slave Column Num</div>
<div class="fld" style="top:833px;width:241px"><span>2</span></div>
<div class="a" style="left:1356px;top:852px;width:137px;height:16px;overflow:hidden"><div class="t" style="left:0;top:0">Cam Definition With Header</div></div>
<div class="cb" style="left:1495px;top:854px"></div>
<svg class="a" style="left:1495px;top:852px" width="14" height="14" viewBox="0 0 14 14"><path d="M2.500 6.500L5.800 10.500 12 1.500" fill="none" stroke="#fff" stroke-width="2"/></svg>
<div class="t" style="left:1356px;top:870px;letter-spacing:.17px">Import On Start</div>
<div class="cb" style="left:1495px;top:872px"></div>
<svg class="a" style="left:1495px;top:870px" width="14" height="14" viewBox="0 0 14 14"><path d="M2.500 6.500L5.800 10.500 12 1.500" fill="none" stroke="#fff" stroke-width="2"/></svg>
<div class="btn" style="left:1355px;top:889px;width:380px;height:17px"></div>
<div class="t" style="left:1353px;width:380px;text-align:center;top:890px">Import CAM</div>
<div class="a" style="left:1341px;top:911px;width:398px;height:1px;background:#2a2a2a"></div>
<div class="a" style="left:1341px;top:912px;width:398px;height:1px;background:#444"></div>
<div class="btn" style="left:1423px;top:921px;width:229px;height:23px;background:linear-gradient(#575757,#424242)"></div>
<div class="t" style="left:1421px;width:229px;text-align:center;top:923px;font-size:12px;letter-spacing:.35px">Add Component</div>
<!-- bottom left project panel peek + status bar -->
<div class="a" style="left:1px;top:683px;width:14px;height:21px;background:#282828"></div>
<div class="a" style="left:1px;top:688px;width:14px;height:16px;background:#3a3a3a;border-radius:3px 0 0 0;border-top:1px solid #4a4a4a"></div>
<div class="a" style="left:1px;top:704px;width:14px;height:17px;background:linear-gradient(#3d3d3d,#313131);border-bottom:1px solid #1c1c1c"></div>
<div class="a" style="left:1px;top:809px;width:14px;height:16px;background:#4b4b4b"></div>
<svg class="a" style="left:45px;top:924px" width="14" height="13" viewBox="0 0 14 13"><path d="M0.500 1.500h5l1 1.500h7v9.500h-13z" fill="#5f6a6e"/><path d="M0.500 4.500h13v8h-13z" fill="#7e8a90"/></svg>
<div class="t" style="left:63px;top:923px">Symlinks</div>
<svg class="a" style="left:34px;top:942px" width="10" height="10" viewBox="0 0 10 10"><path d="M1.200 0.600v8.800L9 5z" fill="#6d6d6d"/></svg>
<svg class="a" style="left:45px;top:940px" width="14" height="13" viewBox="0 0 14 13"><path d="M0.500 1.500h5l1 1.500h7v9.500h-13z" fill="#5f6a6e"/><path d="M0.500 4.500h13v8h-13z" fill="#7e8a90"/><path d="M0.500 4.500h13v1.200h-13z" fill="#a8b4b8"/></svg>
<div class="t" style="left:63px;top:939px">Tests</div>
<div class="a" style="left:32px;top:955px;width:6px;height:2px;background:#ddd"></div>
<div class="a" style="left:416px;top:908px;width:14px;height:49px;background:#2d2d2d;border-left:1px solid #222"></div>
<div class="a" style="left:417px;top:908px;width:12px;height:26px;border-radius:0 0 6px 6px;background:linear-gradient(90deg,#484848,#3a3a3a)"></div>
<div class="a" style="left:418px;top:944px;border:4px solid transparent;border-bottom:none;border-top:6px solid #1c1c1c"></div>
<div class="a" style="left:430px;top:900px;width:908px;height:57px;background:#383838"></div>
<div class="a" style="left:430px;top:941px;width:908px;height:1px;background:#222"></div>
<div class="a" style="left:430px;top:942px;width:908px;height:15px;background:#3c3c3c"></div>
<div class="a" style="left:1272px;top:948px;width:50px;height:2px;background:#2a2a2a;border-radius:1px"></div>
<div class="a" style="left:1265px;top:944px;width:10px;height:10px;border-radius:5px;background:radial-gradient(#6a6a6a,#4a4a4a);border:1px solid #2a2a2a"></div>
<div class="a" style="left:1287px;top:683px;width:51px;height:21px;background:#282828"></div>
<svg class="a" style="left:1308px;top:690px" width="28" height="12" viewBox="0 0 28 12" fill="#9a9a9a"><path d="M1.500 5.500V3.300a2.300 2.300 0 0 1 4.600 0V4" fill="none" stroke="#9a9a9a" stroke-width="1.100"/><rect x="0.500" y="5.800" width="6.600" height="5.200"/><path d="M12.500 4.500h5l-2.500 3z"/><rect x="18.500" y="3.500" width="8" height="1.200"/><rect x="18.500" y="5.700" width="8" height="1.200"/><rect x="18.500" y="7.900" width="8" height="1.200"/></svg>
<div class="a" style="left:1287px;top:704px;width:51px;height:17px;background:linear-gradient(#3d3d3d,#2f2f2f);border-bottom:1px solid #1c1c1c"></div>
<div class="a" style="left:1309px;top:704px;width:1px;height:16px;background:#252525"></div>
<div class="a" style="left:1331px;top:704px;width:1px;height:16px;background:#252525"></div>
<svg class="a" style="left:1291px;top:706px" width="40" height="13" viewBox="0 0 40 13" fill="#8a8a8a"><path d="M2 2.500l3.500-1.500 7 7-4 4.500-6.500-7z"/><circle cx="4" cy="3.500" r="1" fill="#333"/><path d="M29 0.500l1.700 3.800 4.100.4-3.100 2.700.9 4-3.600-2.100-3.600 2.100.9-4-3.100-2.700 4.100-.4z"/></svg>
<div class="a" style="left:1287px;top:721px;width:51px;height:18px;background:#3e3e3e;border-bottom:1px solid #222"></div>
<div class="a" style="left:1287px;top:740px;width:51px;height:201px;background:#383838"></div>
<div class="a" style="left:1px;top:957px;width:1754px;height:23px;background:#282828"></div>
<div class="a" style="left:0px;top:978px;width:1755px;height:2px;background:#8a8a8a"></div>
<svg class="a" style="left:4px;top:963px" width="13" height="13" viewBox="0 0 13 13"><path d="M6.500 0.800L12.600 12H0.400z" fill="#ffd400" stroke="#c89a00" stroke-width=".6"/><path d="M6.500 4.500v4" stroke="#fff" stroke-width="1.600"/><circle cx="6.500" cy="10.300" r=".9" fill="#fff"/></svg>
<div class="t" style="left:21px;top:963px;color:#f4bc02;letter-spacing:.22px">Unable to find style 'MiniToolbarPopup' in skin 'DarkSkin' Layout</div>
<!-- curve window -->
<div class="a" style="left:15px;top:485px;width:1272px;height:437px;background:#2a2a2a;box-shadow:0 1px 7px 2px rgba(22,22,22,.8)"></div>
<div class="a" style="left:15px;top:485px;width:1272px;height:30px;background:#fff"></div>
<div class="t w" style="left:23px;top:493px;color:#111">Curve</div>
<div class="a" style="left:1267px;top:492px;width:18px;height:18px;background:#c7504e"></div>
<div class="t b" style="left:1267px;top:492px;width:18px;text-align:center;color:#fff;font-size:10px;letter-spacing:0">x</div>
<svg class="a" style="left:15px;top:515px" width="1272" height="367" viewBox="15 515 1272 367">
<rect x="15" y="515" width="1272" height="367" fill="#232323"/>
<path d="M71.5 515V881M87.5 515V881M104.5 515V881M121.5 515V881M154.5 515V881M170.5 515V881M187.5 515V881M204.5 515V881M237.5 515V881M253.5 515V881M270.5 515V881M287.5 515V881M320.5 515V881M336.5 515V881M353.5 515V881M370.5 515V881M403.5 515V881M419.5 515V881M436.5 515V881M453.5 515V881M486.5 515V881M502.5 515V881M519.5 515V881M536.5 515V881M569.5 515V881M585.5 515V881M602.5 515V881M619.5 515V881M652.5 515V881M668.5 515V881M685.5 515V881M702.5 515V881M735.5 515V881M751.5 515V881M768.5 515V881M785.5 515V881M818.5 515V881M834.5 515V881M851.5 515V881M868.5 515V881M901.5 515V881M917.5 515V881M934.5 515V881M951.5 515V881M984.5 515V881M1000.5 515V881M1017.5 515V881M1034.5 515V881M1067.5 515V881M1083.5 515V881M1100.5 515V881M1116.5 515V881M1150.5 515V881M1166.5 515V881M1183.5 515V881M1199.5 515V881M1233.5 515V881M1249.5 515V881M1266.5 515V881M38.0 515V881M21.4 515V881M15 829.5H1287M15 817.5H1287M15 806.5H1287M15 794.5H1287M15 771.5H1287M15 760.5H1287M15 748.5H1287M15 737.5H1287M15 714.5H1287M15 703.5H1287M15 691.5H1287M15 680.5H1287M15 657.5H1287M15 646.5H1287M15 634.5H1287M15 623.5H1287M15 600.5H1287M15 588.5H1287M15 577.5H1287M15 565.5H1287M15 543.5H1287M15 531.5H1287M15 520.5H1287M15 851.9H1287M15 863.4H1287M15 874.8H1287" stroke="#262626" stroke-width="1" fill="none"/>
<path d="M54.5 515V881M137.5 515V881M220.5 515V881M303.5 515V881M386.5 515V881M469.5 515V881M552.5 515V881M635.5 515V881M718.5 515V881M801.5 515V881M884.5 515V881M967.5 515V881M1050.5 515V881M1133.5 515V881M1216.5 515V881M15 840.5H1287M15 783.5H1287M15 726.5H1287M15 668.5H1287M15 611.5H1287M15 554.5H1287" stroke="#2f2f2f" stroke-width="1" fill="none"/>
<text x="35.4" y="838.8" text-anchor="end" font-size="9.500" font-family="DejaVu Sans,sans-serif" fill="#646464" letter-spacing=".6">0</text>
<text x="35.4" y="781.6" text-anchor="end" font-size="9.500" font-family="DejaVu Sans,sans-serif" fill="#646464" letter-spacing=".6">5</text>
<text x="35.4" y="724.4" text-anchor="end" font-size="9.500" font-family="DejaVu Sans,sans-serif" fill="#646464" letter-spacing=".6">10</text>
<text x="35.4" y="667.2" text-anchor="end" font-size="9.500" font-family="DejaVu Sans,sans-serif" fill="#646464" letter-spacing=".6">15</text>
<text x="35.4" y="610.0" text-anchor="end" font-size="9.500" font-family="DejaVu Sans,sans-serif" fill="#646464" letter-spacing=".6">20</text>
<text x="35.4" y="552.8" text-anchor="end" font-size="9.500" font-family="DejaVu Sans,sans-serif" fill="#646464" letter-spacing=".6">25</text>
<text x="30.4" y="866.500" font-size="9.500" font-family="DejaVu Sans,sans-serif" fill="#646464" letter-spacing=".7">0</text>
<text x="113.4" y="866.500" font-size="9.500" font-family="DejaVu Sans,sans-serif" fill="#646464" letter-spacing=".7">50</text>
<text x="196.4" y="866.500" font-size="9.500" font-family="DejaVu Sans,sans-serif" fill="#646464" letter-spacing=".7">100</text>
<text x="279.4" y="866.500" font-size="9.500" font-family="DejaVu Sans,sans-serif" fill="#646464" letter-spacing=".7">150</text>
<text x="362.4" y="866.500" font-size="9.500" font-family="DejaVu Sans,sans-serif" fill="#646464" letter-spacing=".7">200</text>
<text x="445.4" y="866.500" font-size="9.500" font-family="DejaVu Sans,sans-serif" fill="#646464" letter-spacing=".7">250</text>
<text x="528.4" y="866.500" font-size="9.500" font-family="DejaVu Sans,sans-serif" fill="#646464" letter-spacing=".7">300</text>
<text x="611.4" y="866.500" font-size="9.500" font-family="DejaVu Sans,sans-serif" fill="#646464" letter-spacing=".7">350</text>
<text x="694.4" y="866.500" font-size="9.500" font-family="DejaVu Sans,sans-serif" fill="#646464" letter-spacing=".7">400</text>
<text x="777.4" y="866.500" font-size="9.500" font-family="DejaVu Sans,sans-serif" fill="#646464" letter-spacing=".7">450</text>
<text x="860.4" y="866.500" font-size="9.500" font-family="DejaVu Sans,sans-serif" fill="#646464" letter-spacing=".7">500</text>
<text x="943.4" y="866.500" font-size="9.500" font-family="DejaVu Sans,sans-serif" fill="#646464" letter-spacing=".7">550</text>
<text x="1026.4" y="866.500" font-size="9.500" font-family="DejaVu Sans,sans-serif" fill="#646464" letter-spacing=".7">600</text>
<text x="1109.4" y="866.500" font-size="9.500" font-family="DejaVu Sans,sans-serif" fill="#646464" letter-spacing=".7">650</text>
<text x="1192.4" y="866.500" font-size="9.500" font-family="DejaVu Sans,sans-serif" fill="#646464" letter-spacing=".7">700</text>
<text x="1275.200" y="866.500" font-size="9.500" font-family="DejaVu Sans,sans-serif" fill="#646464" letter-spacing=".7">75</text>
<defs><marker id="dm" markerWidth="9" markerHeight="9" refX="4.500" refY="4.500" markerUnits="userSpaceOnUse"><path d="M4.500 0.900L8.100 4.500 4.500 8.100 0.900 4.500z" fill="#00f400" stroke="#031403" stroke-width="1"/><path d="M4.500 3.300L5.700 4.500 4.500 5.700 3.300 4.500z" fill="#052a05"/></marker></defs>
<polyline points="54.6,840.5 56.3,840.5 57.9,840.5 59.6,840.5 61.2,840.5 62.9,840.5 64.6,840.5 66.2,840.5 67.9,840.5 69.5,840.5 71.2,840.5 72.9,840.5 74.5,840.5 76.2,840.5 77.8,840.5 79.5,840.5 81.2,840.5 82.8,840.5 84.5,840.5 86.1,840.5 87.8,840.5 89.5,840.5 91.1,840.5 92.8,840.5 94.4,840.5 96.1,840.5 97.8,840.5 99.4,840.5 101.1,840.5 102.7,840.5 104.4,840.5 106.1,840.5 107.7,840.5 109.4,840.5 111.0,840.5 112.7,840.5 114.4,840.5 116.0,840.4 117.7,839.8 119.3,838.6 121.0,836.9 122.7,834.7 124.3,832.1 126.0,829.1 127.6,825.7 129.3,822.0 131.0,818.0 132.6,813.7 134.3,809.3 135.9,804.7 137.6,800.0 139.3,795.3 140.9,790.5 142.6,785.7 144.2,780.8 145.9,775.3 147.6,769.0 149.2,762.2 150.9,755.0 152.5,747.4 154.2,739.5 155.9,731.6 157.5,723.7 159.2,715.2 160.8,706.1 162.5,696.8 164.2,687.4 165.8,678.3 167.5,669.7 169.1,661.5 170.8,653.0 172.5,644.6 174.1,636.5 175.8,628.8 177.4,621.9 179.1,615.8 180.8,610.8 182.4,606.2 184.1,601.6 185.7,597.1 187.4,592.7 189.1,588.4 190.7,584.3 192.4,580.3 194.0,576.5 195.7,572.9 197.4,569.5 199.0,566.4 200.7,563.6 202.3,561.2 204.0,559.1 205.7,557.3 207.3,556.0 209.0,555.0 210.6,554.6 212.3,554.5 214.0,554.5 215.6,554.5 217.3,554.5 218.9,554.5 220.6,554.5 222.3,554.5 223.9,554.5 225.6,554.5 227.2,554.5 228.9,554.5 230.6,554.5 232.2,554.5 233.9,554.5 235.5,554.5 237.2,554.5 238.9,554.5 240.5,554.5 242.2,554.5 243.8,554.5 245.5,554.5 247.2,554.5 248.8,554.5 250.5,554.5 252.1,554.5 253.8,554.5 255.5,554.5 257.1,554.5 258.8,554.5 260.4,554.5 262.1,554.5 263.8,554.5 265.4,554.5 267.1,554.5 268.7,554.5 270.4,554.5 272.1,554.5 273.7,554.5 275.4,554.5 277.0,554.5 278.7,554.5 280.4,554.5 282.0,554.5 283.7,554.5 285.3,554.5 287.0,554.5 288.7,554.5 290.3,554.5 292.0,554.5 293.6,554.5 295.3,554.5 297.0,554.5 298.6,554.5 300.3,554.5 301.9,554.5 303.6,554.5 305.3,554.5 306.9,554.5 308.6,554.5 310.2,554.5 311.9,554.5 313.6,554.5 315.2,554.5 316.9,554.5 318.5,554.5 320.2,554.5 321.9,554.5 323.5,554.5 325.2,554.5 326.8,554.5 328.5,554.5 330.2,554.5 331.8,554.5 333.5,554.5 335.1,554.5 336.8,554.5 338.5,554.5 340.1,554.5 341.8,554.5 343.4,554.5 345.1,554.5 346.8,554.5 348.4,554.5 350.1,554.5 351.7,554.5 353.4,554.5 355.1,554.5 356.7,554.5 358.4,554.5 360.0,554.5 361.7,554.5 363.4,554.5 365.0,554.5 366.7,554.5 368.3,554.5 370.0,554.5 371.7,554.5 373.3,554.5 375.0,554.5 376.6,554.5 378.3,554.5 380.0,554.5 381.6,554.5 383.3,554.5 384.9,554.5 386.6,554.5 388.3,554.5 389.9,554.5 391.6,554.5 393.2,554.5 394.9,554.5 396.6,554.5 398.2,554.5 399.9,554.5 401.5,554.5 403.2,554.5 404.9,554.5 406.5,554.5 408.2,554.5 409.8,554.5 411.5,554.5 413.2,554.5 414.8,554.5 416.5,554.5 418.1,554.5 419.8,554.5 421.5,554.5 423.1,554.5 424.8,554.5 426.4,554.5 428.1,554.5 429.8,554.5 431.4,554.5 433.1,554.5 434.7,554.5 436.4,554.5 438.1,554.5 439.7,554.5 441.4,554.5 443.0,554.5 444.7,554.5 446.4,554.5 448.0,554.8 449.7,555.2 451.3,555.9 453.0,556.9 454.7,558.0 456.3,559.4 458.0,560.9 459.6,562.7 461.3,564.6 463.0,566.6 464.6,568.8 466.3,571.2 467.9,573.6 469.6,576.2 471.3,578.9 472.9,581.7 474.6,584.6 476.2,587.5 477.9,590.5 479.6,593.6 481.2,596.7 482.9,599.8 484.5,602.9 486.2,606.1 487.9,609.2 489.5,612.3 491.2,615.8 492.8,619.6 494.5,623.7 496.2,628.2 497.8,632.9 499.5,637.9 501.1,642.9 502.8,648.1 504.5,653.3 506.1,658.6 507.8,663.8 509.4,668.9 511.1,674.0 512.8,679.4 514.4,684.8 516.1,690.4 517.7,696.0 519.4,701.6 521.1,707.2 522.7,712.8 524.4,718.2 526.0,723.5 527.7,728.7 529.4,734.2 531.0,740.0 532.7,746.0 534.3,751.9 536.0,757.7 537.7,763.3 539.3,768.4 541.0,773.1 542.6,777.1 544.3,780.4 546.0,782.8 547.6,784.4 549.3,785.9 550.9,787.3 552.6,788.7 554.3,790.0 555.9,791.2 557.6,792.4 559.2,793.4 560.9,794.4 562.6,795.3 564.2,796.1 565.9,796.8 567.5,797.3 569.2,797.8 570.9,798.2 572.5,798.4 574.2,798.5 575.8,798.5 577.5,798.5 579.2,798.5 580.8,798.5 582.5,798.5 584.1,798.5 585.8,798.5 587.5,798.5 589.1,798.5 590.8,798.5 592.4,798.5 594.1,798.5 595.8,798.5 597.4,798.5 599.1,798.5 600.7,798.5 602.4,798.5 604.1,798.5 605.7,798.5 607.4,798.5 609.0,798.5 610.7,798.5 612.4,798.5 614.0,798.5 615.7,798.5 617.3,798.5 619.0,798.5 620.7,798.5 622.3,798.5 624.0,798.5 625.6,798.5 627.3,798.5 629.0,798.5 630.6,798.5 632.3,798.5 633.9,798.5 635.6,798.5 637.3,798.5 638.9,798.5 640.6,797.8 642.2,796.6 643.9,794.9 645.6,792.7 647.2,790.1 648.9,787.3 650.5,784.2 652.2,780.6 653.9,775.1 655.5,768.1 657.2,760.0 658.8,751.3 660.5,742.3 662.2,733.5 663.8,725.3 665.5,717.3 667.1,709.2 668.8,701.0 670.5,692.7 672.1,684.4 673.8,676.2 675.4,668.1 677.1,659.7 678.8,650.9 680.4,641.9 682.1,633.3 683.7,625.3 685.4,618.3 687.1,612.6 688.7,608.1 690.4,603.6 692.0,599.2 693.7,594.9 695.4,590.7 697.0,586.7 698.7,582.8 700.3,579.0 702.0,575.5 703.7,572.2 705.3,569.1 707.0,566.2 708.6,563.6 710.3,561.3 712.0,559.3 713.6,557.6 715.3,556.3 716.9,555.3 718.6,554.7 720.3,554.5 721.9,554.5 723.6,554.5 725.2,554.5 726.9,554.5 728.6,554.5 730.2,554.5 731.9,554.5 733.5,554.5 735.2,554.5 736.9,554.5 738.5,554.5 740.2,554.5 741.8,554.5 743.5,554.5 745.2,554.5 746.8,554.5 748.5,554.5 750.1,554.5 751.8,554.5 753.5,554.5 755.1,554.5 756.8,554.5 758.4,554.5 760.1,554.5 761.8,554.5 763.4,554.5 765.1,554.5 766.7,554.5 768.4,554.5 770.1,554.5 771.7,554.5 773.4,554.5 775.0,554.5 776.7,554.5 778.4,554.5 780.0,554.5 781.7,554.5 783.3,554.5 785.0,554.5 786.7,554.5 788.3,554.5 790.0,554.5 791.6,554.5 793.3,554.5 795.0,554.5 796.6,554.5 798.3,554.5 799.9,554.5 801.6,554.5 803.3,554.5 804.9,554.5 806.6,554.5 808.2,554.5 809.9,554.5 811.6,554.5 813.2,554.5 814.9,554.5 816.5,554.5 818.2,554.5 819.9,554.5 821.5,554.5 823.2,554.5 824.8,554.5 826.5,554.5 828.2,554.5 829.8,554.5 831.5,554.5 833.1,554.5 834.8,554.5 836.5,554.5 838.1,554.5 839.8,554.5 841.4,554.5 843.1,554.5 844.8,554.5 846.4,554.5 848.1,554.5 849.7,554.5 851.4,554.5 853.1,554.5 854.7,554.5 856.4,554.5 858.0,554.5 859.7,554.5 861.4,554.5 863.0,554.5 864.7,554.5 866.3,554.5 868.0,554.5 869.7,554.5 871.3,554.5 873.0,554.5 874.6,554.5 876.3,554.5 878.0,554.5 879.6,554.5 881.3,554.5 882.9,554.5 884.6,554.5 886.3,554.5 887.9,554.5 889.6,554.5 891.2,554.5 892.9,554.5 894.6,554.5 896.2,554.5 897.9,554.5 899.5,554.5 901.2,554.5 902.9,554.5 904.5,554.5 906.2,554.5 907.8,554.5 909.5,554.5 911.2,554.5 912.8,554.5 914.5,554.5 916.1,554.5 917.8,554.5 919.5,554.5 921.1,554.5 922.8,554.5 924.4,554.5 926.1,554.5 927.8,554.5 929.4,554.5 931.1,554.5 932.7,554.5 934.4,554.5 936.1,554.5 937.7,554.5 939.4,554.5 941.0,554.5 942.7,554.5 944.4,554.5 946.0,554.5 947.7,554.5 949.3,554.5 951.0,554.5 952.7,554.5 954.3,554.5 956.0,554.5 957.6,554.5 959.3,554.5 961.0,554.5 962.6,554.5 964.3,554.5 965.9,554.5 967.6,554.5 969.3,554.5 970.9,554.5 972.6,554.5 974.2,554.5 975.9,554.5 977.6,554.5 979.2,554.5 980.9,554.5 982.5,554.5 984.2,554.5 985.9,554.5 987.5,554.5 989.2,554.5 990.8,554.5 992.5,554.5 994.2,554.5 995.8,554.5 997.5,554.5 999.1,554.5 1000.8,554.5 1002.5,554.5 1004.1,554.5 1005.8,554.5 1007.4,554.5 1009.1,554.5 1010.8,554.5 1012.4,554.5 1014.1,554.5 1015.7,554.5 1017.4,554.5 1019.1,554.5 1020.7,554.5 1022.4,554.5 1024.0,554.5 1025.7,554.5 1027.4,554.5 1029.0,554.5 1030.7,554.5 1032.3,554.5 1034.0,554.5 1035.7,554.5 1037.3,554.5 1039.0,554.5 1040.6,554.5 1042.3,554.5 1044.0,554.5 1045.6,554.5 1047.3,554.5 1048.9,554.5 1050.6,554.5 1052.3,554.5 1053.9,554.5 1055.6,554.5 1057.2,554.5 1058.9,554.5 1060.6,554.5 1062.2,554.5 1063.9,554.5 1065.5,554.5 1067.2,554.5 1068.9,554.5 1070.5,554.5 1072.2,554.5 1073.8,554.5 1075.5,554.5 1077.2,554.5 1078.8,554.5 1080.5,554.5 1082.1,554.5 1083.8,554.5 1085.5,554.5 1087.1,554.5 1088.8,554.5 1090.4,554.5 1092.1,554.5 1093.8,554.5 1095.4,554.5 1097.1,554.5 1098.7,554.5 1100.4,554.5 1102.1,554.5 1103.7,554.5 1105.4,554.5 1107.0,554.5 1108.7,554.5 1110.4,554.5 1112.0,554.5 1113.7,554.5 1115.3,554.5 1117.0,554.5 1118.7,554.5 1120.3,554.5 1122.0,554.5 1123.6,554.5 1125.3,554.5 1127.0,554.5 1128.6,554.5 1130.3,554.5 1131.9,554.5 1133.6,554.5 1135.3,554.7 1136.9,555.4 1138.6,556.5 1140.2,557.9 1141.9,559.8 1143.6,562.0 1145.2,564.5 1146.9,567.3 1148.5,570.4 1150.2,573.7 1151.9,577.3 1153.5,581.1 1155.2,585.1 1156.8,589.3 1158.5,593.6 1160.2,598.0 1161.8,602.5 1163.5,607.1 1165.1,611.7 1166.8,617.1 1168.5,623.9 1170.1,631.7 1171.8,640.1 1173.4,648.9 1175.1,657.8 1176.8,666.4 1178.4,674.7 1180.1,683.2 1181.7,691.8 1183.4,700.6 1185.1,709.2 1186.7,717.8 1188.4,726.1 1190.0,734.5 1191.7,743.2 1193.4,752.0 1195.0,760.5 1196.7,768.5 1198.3,775.6 1200.0,781.7 1201.7,786.8 1203.3,791.8 1205.0,796.8 1206.6,801.7 1208.3,806.5 1210.0,811.2 1211.6,815.6 1213.3,819.8 1214.9,823.7 1216.6,827.3 1218.3,830.6 1219.9,833.5 1221.6,835.9 1223.2,837.8 1224.9,839.3 1226.6,840.2 1228.2,840.5 1229.9,840.5 1231.5,840.5 1233.2,840.5 1234.9,840.5 1236.5,840.5 1238.2,840.5 1239.8,840.5 1241.5,840.5 1243.2,840.5 1244.8,840.5 1246.5,840.5 1248.1,840.5" fill="none" stroke="#00d800" stroke-width="1" marker-start="url(#dm)" marker-mid="url(#dm)" marker-end="url(#dm)"/>
<path d="M15 840.500H54M1254 840.500H1287" stroke="#9a9a9a" stroke-width="1"/>
<g transform="translate(38.5 847.5)"><circle r="3.200" fill="none" stroke="#c4c4c4" stroke-width="2.400" stroke-dasharray="1.500 1.010"/><circle r="2.400" fill="none" stroke="#c4c4c4" stroke-width="1.500"/></g><path d="M42.7 849.9h3.400l-1.700 2.600z" fill="#c4c4c4"/>
<g transform="translate(1260.5 847.5)"><circle r="3.200" fill="none" stroke="#c4c4c4" stroke-width="2.400" stroke-dasharray="1.500 1.010"/><circle r="2.400" fill="none" stroke="#c4c4c4" stroke-width="1.500"/></g><path d="M1264.7 849.9h3.400l-1.700 2.600z" fill="#c4c4c4"/>
<rect x="1277.500" y="517" width="5" height="346" rx="2.500" fill="#4a4a4a"/>
<rect x="1278.500" y="853" width="3" height="8" rx="1" fill="#3a3a3a"/>
<rect x="17.500" y="871.500" width="1254" height="5" rx="2.500" fill="#4a4a4a"/>
<rect x="19" y="872.500" width="7" height="3" rx="1" fill="#3a3a3a"/><rect x="1262" y="872.500" width="7" height="3" rx="1" fill="#3a3a3a"/>
<rect x="15" y="881" width="1272" height="1" fill="#353535"/>
</svg>
<svg class="a" style="left:15px;top:882px" width="1272" height="40" viewBox="15 882 1272 40">
<g transform="translate(44.5 904)"><circle r="3.200" fill="none" stroke="#c4c4c4" stroke-width="2.400" stroke-dasharray="1.500 1.010"/><circle r="2.400" fill="none" stroke="#c4c4c4" stroke-width="1.500"/></g><path d="M48.7 906.4h3.400l-1.700 2.600z" fill="#c4c4c4"/>
<rect x="60" y="892" width="40" height="25" fill="#555"/>
<rect x="105" y="892" width="40" height="25" fill="#555"/>
<rect x="150" y="892" width="40" height="25" fill="#555"/>
<rect x="195" y="892" width="40" height="25" fill="#555"/>
<rect x="240" y="892" width="40" height="25" fill="#555"/>
<path d="M61 904.500H99" stroke="#e8e8e8" stroke-width="1.100" fill="none"/>
<path d="M106 916L144 893" stroke="#e8e8e8" stroke-width="1.100" fill="none"/>
<path d="M151 916C170 915 180 905 189 893" stroke="#e8e8e8" stroke-width="1.100" fill="none"/>
<path d="M196 916C205 903 216 894 234 893" stroke="#e8e8e8" stroke-width="1.100" fill="none"/>
<path d="M241 916C258 915 262 894 279 893" stroke="#e8e8e8" stroke-width="1.100" fill="none"/>
</svg>
<svg class="a" style="left:934px;top:517px" width="13" height="20" viewBox="0 0 13 20"><path d="M1 1V16.500L4.700 13l2.600 5.800 2.300-1L7 12.200h5z" fill="#fff" stroke="#000" stroke-width="1"/></svg>
</body></html>
